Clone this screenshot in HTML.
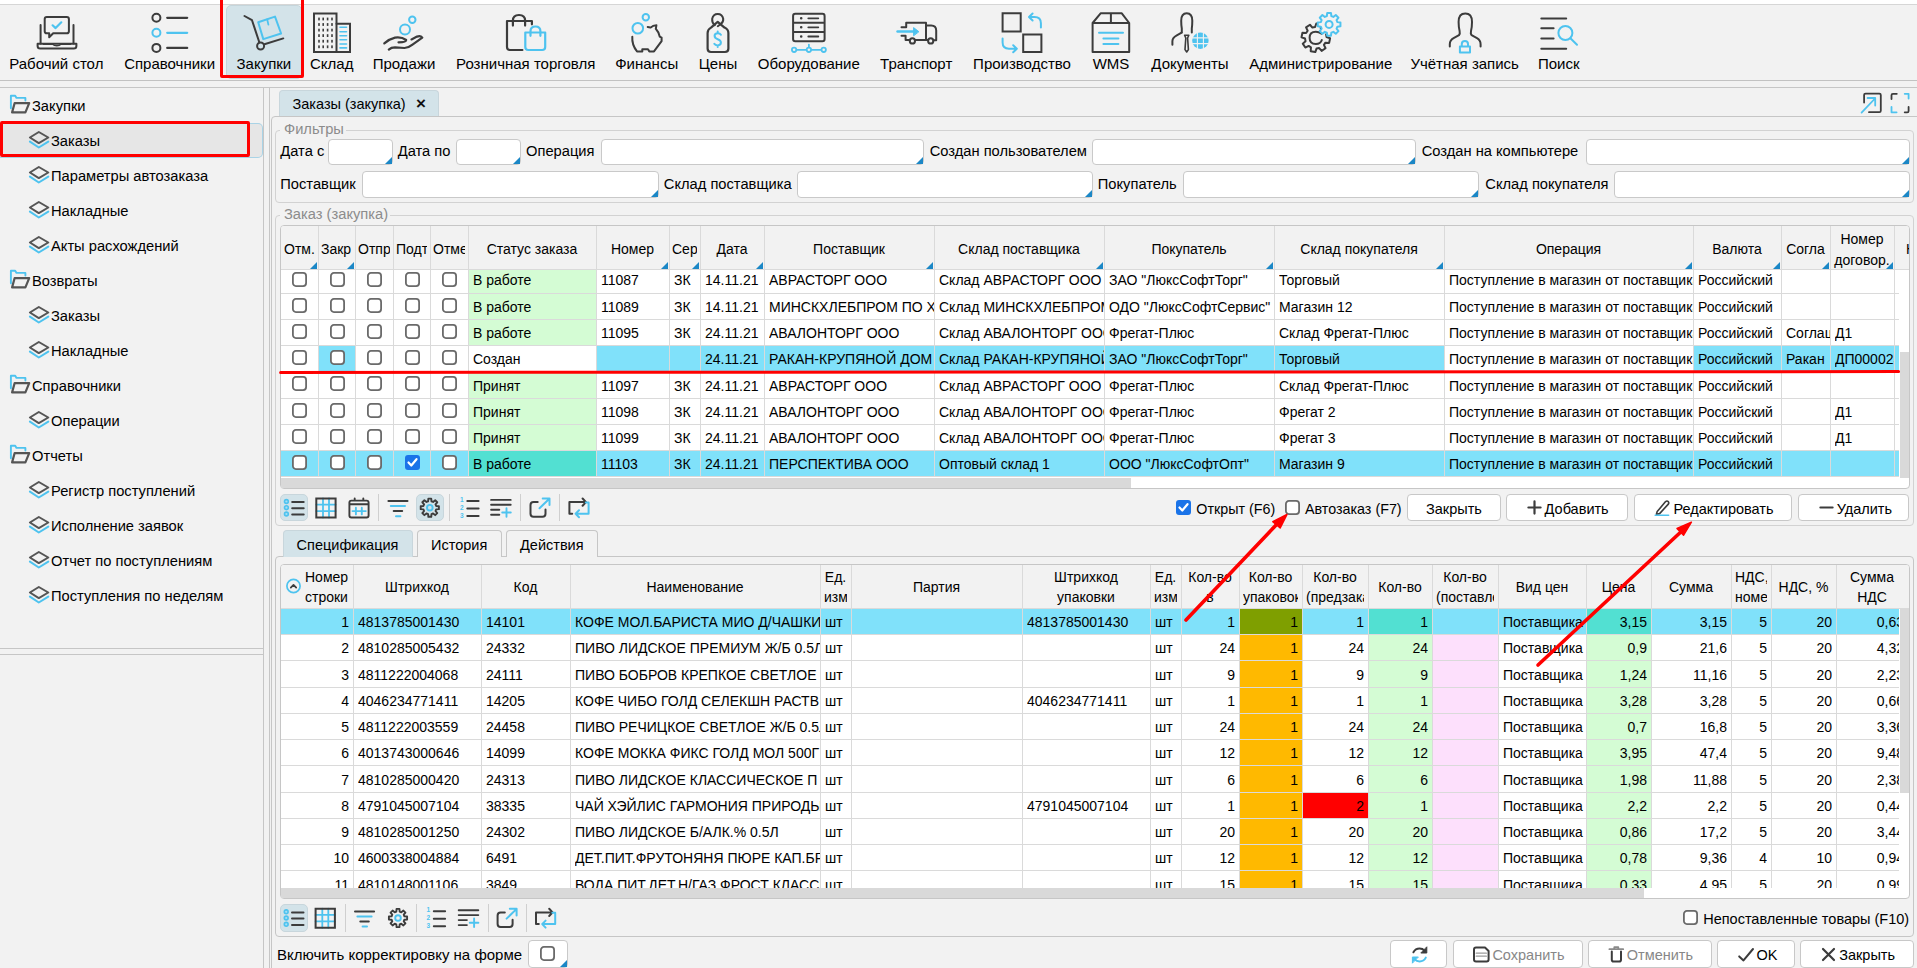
<!DOCTYPE html>
<html><head><meta charset="utf-8"><style>
html,body{margin:0;padding:0;}
body{width:1917px;height:968px;overflow:hidden;position:relative;background:#f2f2f2;font-family:"Liberation Sans", sans-serif;color:#000;}
.a{position:absolute;box-sizing:border-box;}
.t{line-height:20px;white-space:nowrap;}
.c{position:absolute;box-sizing:border-box;overflow:hidden;white-space:nowrap;font-size:14px;line-height:20px;padding:0 4px;}
</style></head><body>
<div class="a" style="left:0px;top:0px;width:1917px;height:4px;background:#fff"></div><div class="a" style="left:0px;top:4px;width:1917px;height:1px;background:#d6d6d6"></div><div class="a" style="left:0px;top:80px;width:1917px;height:1px;background:#c2c2c2"></div><div class="a" style="left:0px;top:87px;width:1917px;height:1px;background:#c6c6c6"></div><div class="a" style="left:226px;top:5px;width:76px;height:74px;background:#d3e3e9;border:1px solid #c5d5db;border-radius:5px"></div><div class="a t" style="left:-93.7px;width:300px;text-align:center;top:54px;font-size:15px;color:#000;">Рабочий стол</div><div class="a t" style="left:19.599999999999994px;width:300px;text-align:center;top:54px;font-size:15px;color:#000;">Справочники</div><div class="a t" style="left:113.89999999999998px;width:300px;text-align:center;top:54px;font-size:15px;color:#000;">Закупки</div><div class="a t" style="left:181.7px;width:300px;text-align:center;top:54px;font-size:15px;color:#000;">Склад</div><div class="a t" style="left:254px;width:300px;text-align:center;top:54px;font-size:15px;color:#000;">Продажи</div><div class="a t" style="left:375.70000000000005px;width:300px;text-align:center;top:54px;font-size:15px;color:#000;">Розничная торговля</div><div class="a t" style="left:496.70000000000005px;width:300px;text-align:center;top:54px;font-size:15px;color:#000;">Финансы</div><div class="a t" style="left:568px;width:300px;text-align:center;top:54px;font-size:15px;color:#000;">Цены</div><div class="a t" style="left:658.8px;width:300px;text-align:center;top:54px;font-size:15px;color:#000;">Оборудование</div><div class="a t" style="left:766.2px;width:300px;text-align:center;top:54px;font-size:15px;color:#000;">Транспорт</div><div class="a t" style="left:872px;width:300px;text-align:center;top:54px;font-size:15px;color:#000;">Производство</div><div class="a t" style="left:961px;width:300px;text-align:center;top:54px;font-size:15px;color:#000;">WMS</div><div class="a t" style="left:1040px;width:300px;text-align:center;top:54px;font-size:15px;color:#000;">Документы</div><div class="a t" style="left:1170.8px;width:300px;text-align:center;top:54px;font-size:15px;color:#000;">Администрирование</div><div class="a t" style="left:1314.7px;width:300px;text-align:center;top:54px;font-size:15px;color:#000;">Учётная запись</div><div class="a t" style="left:1408.8px;width:300px;text-align:center;top:54px;font-size:15px;color:#000;">Поиск</div><svg class="a" style="left:0;top:0" width="1917" height="968" viewBox="0 0 1917 968" fill="none" stroke-linecap="round" stroke-linejoin="round"><path d="M40.6 25 V43.5 M73.5 25 V43.5" stroke="#3c3c3c" stroke-width="2" fill="none" /><path d="M37.6 43.8 H76.4 V46 Q76.4 48.6 73.8 48.6 H40.2 Q37.6 48.6 37.6 46 Z" stroke="#3c3c3c" stroke-width="2" fill="none" /><path d="M43.5 44.3 H52.8 Q54 45.8 56.8 45.8 Q59.6 45.8 60.8 44.3 H70.5" stroke="#3c3c3c" stroke-width="1.5" fill="none" /><path d="M46.8 17 H66.8 Q68.9 17 68.9 19.1 V31.2 Q68.9 33.3 66.8 33.3 H53.2 L49.2 37.3 V33.3 H46.8 Q44.7 33.3 44.7 31.2 V19.1 Q44.7 17 46.8 17 Z" stroke="#3c3c3c" stroke-width="2" fill="none" /><path d="M52.6 25.3 L55.6 28.1 L61.3 22.3" stroke="#4ec3ef" stroke-width="2.2" fill="none" /><circle cx="156.4" cy="17.8" r="4" stroke="#3c3c3c" stroke-width="2" fill="none"/><path d="M167.2 17.8 H187.2" stroke="#3c3c3c" stroke-width="2.2" fill="none" /><circle cx="156.4" cy="32.8" r="4" stroke="#4ec3ef" stroke-width="2" fill="none"/><path d="M167.2 32.8 H187.2" stroke="#4ec3ef" stroke-width="2.2" fill="none" /><circle cx="156.4" cy="47.9" r="4" stroke="#3c3c3c" stroke-width="2" fill="none"/><path d="M167.2 47.9 H187.2" stroke="#3c3c3c" stroke-width="2.2" fill="none" /><path d="M244.5 16 L252 20.2 L259.3 42.2" stroke="#3c3c3c" stroke-width="2" fill="none" /><circle cx="260.6" cy="46" r="3.5" stroke="#3c3c3c" stroke-width="2" fill="none"/><path d="M264.4 44.2 L283.3 38.4" stroke="#3c3c3c" stroke-width="2" fill="none" /><path d="M258.2 22.2 L275 16.6 L281.1 33.5 L263.3 39.1 Z" stroke="#4ec3ef" stroke-width="2" fill="none" /><path d="M267.2 19.4 L268.4 24.6" stroke="#4ec3ef" stroke-width="1.8" fill="none" /><path d="M314 13.5 H336.5 V52 H314 Z" stroke="#3c3c3c" stroke-width="2" fill="none" stroke-linejoin="miter"/><path d="M336.5 23.8 H350 V52 H336.5" stroke="#3c3c3c" stroke-width="2" fill="none" stroke-linejoin="miter"/><rect x="318.2" y="17.6" width="1.6" height="2.8" fill="#3c3c3c"/><rect x="318.2" y="23.1" width="1.6" height="2.8" fill="#3c3c3c"/><rect x="318.2" y="28.700000000000003" width="1.6" height="2.8" fill="#3c3c3c"/><rect x="318.2" y="34.2" width="1.6" height="2.8" fill="#3c3c3c"/><rect x="318.2" y="39.800000000000004" width="1.6" height="2.8" fill="#3c3c3c"/><rect x="318.2" y="45.4" width="1.6" height="2.8" fill="#3c3c3c"/><rect x="322.4" y="17.6" width="1.6" height="2.8" fill="#3c3c3c"/><rect x="322.4" y="23.1" width="1.6" height="2.8" fill="#3c3c3c"/><rect x="322.4" y="28.700000000000003" width="1.6" height="2.8" fill="#3c3c3c"/><rect x="322.4" y="34.2" width="1.6" height="2.8" fill="#3c3c3c"/><rect x="322.4" y="39.800000000000004" width="1.6" height="2.8" fill="#3c3c3c"/><rect x="322.4" y="45.4" width="1.6" height="2.8" fill="#3c3c3c"/><rect x="326.8" y="17.6" width="1.6" height="2.8" fill="#3c3c3c"/><rect x="326.8" y="23.1" width="1.6" height="2.8" fill="#3c3c3c"/><rect x="326.8" y="28.700000000000003" width="1.6" height="2.8" fill="#3c3c3c"/><rect x="326.8" y="34.2" width="1.6" height="2.8" fill="#3c3c3c"/><rect x="326.8" y="39.800000000000004" width="1.6" height="2.8" fill="#3c3c3c"/><rect x="326.8" y="45.4" width="1.6" height="2.8" fill="#3c3c3c"/><rect x="331.2" y="17.6" width="1.6" height="2.8" fill="#3c3c3c"/><rect x="331.2" y="23.1" width="1.6" height="2.8" fill="#3c3c3c"/><rect x="331.2" y="28.700000000000003" width="1.6" height="2.8" fill="#3c3c3c"/><rect x="331.2" y="34.2" width="1.6" height="2.8" fill="#3c3c3c"/><rect x="331.2" y="39.800000000000004" width="1.6" height="2.8" fill="#3c3c3c"/><rect x="331.2" y="45.4" width="1.6" height="2.8" fill="#3c3c3c"/><path d="M340 27.3 H346.5" stroke="#4ec3ef" stroke-width="1.6" fill="none" /><path d="M340 31.8 H346.5" stroke="#4ec3ef" stroke-width="1.6" fill="none" /><path d="M340 35.7 H346.5" stroke="#4ec3ef" stroke-width="1.6" fill="none" /><path d="M340 39.8 H346.5" stroke="#4ec3ef" stroke-width="1.6" fill="none" /><path d="M340 44 H346.5" stroke="#4ec3ef" stroke-width="1.6" fill="none" /><path d="M340 47.9 H346.5" stroke="#4ec3ef" stroke-width="1.6" fill="none" /><circle cx="412.3" cy="19.7" r="3.2" stroke="#4ec3ef" stroke-width="2" fill="none"/><circle cx="405" cy="29.4" r="5" stroke="#4ec3ef" stroke-width="2" fill="none"/><path d="M384.3 43.4 Q389.5 38.8 395 37.6 Q401.5 36.6 406.2 40 Q406.2 42.3 398.5 42.3" stroke="#3c3c3c" stroke-width="2.2" fill="none" /><path d="M388.8 49.6 Q391.2 47.4 395 47.4 L404.5 48 Q408.5 47.8 412.5 44.6 L422.3 37.6 Q420.5 35.3 417 36.6 L411.5 39.4" stroke="#3c3c3c" stroke-width="2.2" fill="none" /><path d="M531.9 24.3 V21 H507 V47 Q507 50 510 50 H522.4" stroke="#3c3c3c" stroke-width="2.2" fill="none" /><path d="M512.9 25.6 V20.6 Q512.9 15 519 15 Q525.1 15 525.1 20.6 V25.6" stroke="#3c3c3c" stroke-width="2.2" fill="none" /><path d="M525.3 32.5 H545.2 V47 Q545.2 50 542.2 50 H528.3 Q525.3 50 525.3 47 Z" stroke="#4ec3ef" stroke-width="2.2" fill="none" /><path d="M530.5 35.8 V31.3 Q530.5 26.5 535.5 26.5 Q540.4 26.5 540.4 31.3 V35.8" stroke="#4ec3ef" stroke-width="2.2" fill="none" /><circle cx="637.8" cy="28.3" r="5.3" stroke="#4ec3ef" stroke-width="2" fill="none"/><circle cx="645.8" cy="17.3" r="3.2" stroke="#4ec3ef" stroke-width="2" fill="none"/><path d="M632.3 36.8 Q631.7 44.8 637 51.4 H642.3 V49.3 H648 L649.3 51.4 H654 L661.6 41.2 V37.6 L659.7 36.6 Q658.4 31.5 655.8 28.8 L656.4 25.3 Q652.8 25.4 650.6 27.6 Q649.1 27 647.7 27" stroke="#3c3c3c" stroke-width="2" fill="none" /><path d="M707.6 33 Q707.6 29.4 711 27.6 L717.7 21.8 L724.5 27.6 Q728.4 29.4 728.4 33 V48.6 Q728.4 52 725 52 H711 Q707.6 52 707.6 48.6 Z" stroke="#3c3c3c" stroke-width="2.2" fill="none" /><path d="M714.8 25.2 Q711.8 22.8 712.2 18.8 Q713.2 14 717.7 14 Q722.3 14 723.2 18.8 Q723.6 22 720.5 24.2 L717.8 26.2" stroke="#3c3c3c" stroke-width="2" fill="none" /><path d="M720.9 34.8 Q720 33.2 717.7 33.2 Q714.6 33.2 714.6 35.8 Q714.6 38.2 717.7 39.2 Q720.9 40.2 720.9 42.6 Q720.9 45.4 717.7 45.4 Q715.2 45.4 714.3 43.8 M717.7 31.6 V33.2 M717.7 45.4 V47" stroke="#4ec3ef" stroke-width="2" fill="none" /><path d="M795.3 13.8 H822.4 Q824.6 13.8 824.6 16 V39 Q824.6 41.2 822.4 41.2 H795.3 Q793.1 41.2 793.1 39 V16 Q793.1 13.8 795.3 13.8 Z M793.1 22.7 H824.6 M793.1 31.9 H824.6" stroke="#3c3c3c" stroke-width="2" fill="none" /><circle cx="801.2" cy="18.3" r="0.6" stroke="#3c3c3c" stroke-width="1.4" fill="#3c3c3c"/><path d="M808.3 18.3 H818.3" stroke="#3c3c3c" stroke-width="1.8" fill="none" /><circle cx="801.2" cy="27.3" r="0.6" stroke="#3c3c3c" stroke-width="1.4" fill="#3c3c3c"/><path d="M808.3 27.3 H818.3" stroke="#3c3c3c" stroke-width="1.8" fill="none" /><circle cx="801.2" cy="36.5" r="0.6" stroke="#3c3c3c" stroke-width="1.4" fill="#3c3c3c"/><path d="M808.3 36.5 H818.3" stroke="#3c3c3c" stroke-width="1.8" fill="none" /><path d="M796.3 49.8 H806.7 M811.1 49.8 H821.5 M808.9 44.6 V47.6" stroke="#4ec3ef" stroke-width="1.8" fill="none" /><circle cx="794.1" cy="49.8" r="2.2" stroke="#4ec3ef" stroke-width="1.8" fill="#f2f2f2"/><circle cx="808.9" cy="49.8" r="2.2" stroke="#4ec3ef" stroke-width="1.8" fill="#f2f2f2"/><circle cx="823.7" cy="49.8" r="2.2" stroke="#4ec3ef" stroke-width="1.8" fill="#f2f2f2"/><path d="M901.5 27.2 H906.2 V22.7 H926 V39.9 M901.5 35.7 H905.6 V39.9 H909.6 M915.3 39.9 H927.8 M926 25.4 H931.2 Q936.2 25.4 936.2 30.5 V40.3 H933.6" stroke="#3c3c3c" stroke-width="2" fill="none" /><circle cx="912.4" cy="40.9" r="2.6" stroke="#3c3c3c" stroke-width="2" fill="#f2f2f2"/><circle cx="930.7" cy="40.9" r="2.6" stroke="#3c3c3c" stroke-width="2" fill="#f2f2f2"/><path d="M897.5 31.5 H914.5" stroke="#4ec3ef" stroke-width="2.4" fill="none" /><path d="M918.6 31.5 L913.6 27.6 V35.4 Z" stroke="#4ec3ef" stroke-width="1" fill="#4ec3ef" /><path d="M1002.6 13.3 H1020.7 V31.4 H1002.6 Z M1023.2 34.5 H1041.4 V52.1 H1023.2 Z" stroke="#3c3c3c" stroke-width="2" fill="none" stroke-linejoin="miter"/><path d="M1040.9 27.6 V23.2 Q1040.9 17 1034.5 17 H1029.2 M1032.6 13.5 L1029 17 L1032.6 20.5" stroke="#4ec3ef" stroke-width="2" fill="none" /><path d="M1002.6 38.4 V42.6 Q1002.6 48.7 1009 48.7 H1016.6 M1013.2 45.2 L1016.8 48.7 L1013.2 52.2" stroke="#4ec3ef" stroke-width="2" fill="none" /><path d="M1092.6 23 L1100.6 13.3 H1121.8 L1129.2 23 V52.1 H1092.6 Z M1092.6 23 H1129.2 M1110.9 13.3 V23" stroke="#3c3c3c" stroke-width="2" fill="none" /><path d="M1099 32.7 H1123 M1103.4 38.4 H1118.4 M1103.4 44.1 H1118.4" stroke="#4ec3ef" stroke-width="2" fill="none" /><path d="M1181.8 32.5 V28.5 Q1181.2 25 1181.2 20.8 Q1181.2 13.3 1186.7 13.3 Q1192.3 13.3 1192.3 20.8 Q1192.3 25 1191.8 28.5 V32.5" stroke="#3c3c3c" stroke-width="2" fill="none" /><path d="M1181.6 32.7 L1176.8 35.3 Q1172.4 37.6 1172.4 41.2 V44.7" stroke="#3c3c3c" stroke-width="2" fill="none" /><path d="M1184.6 35.2 H1188.8 L1187.6 38 L1188.4 49.6 L1186.7 52 L1185 49.6 L1185.8 38 Z" stroke="#3c3c3c" stroke-width="1.6" fill="none" /><circle cx="1200.4" cy="40.8" r="8.2" stroke="#4ec3ef" stroke-width="0" fill="#4ec3ef"/><path d="M1197.4 33 V48.6 M1203.4 33 V48.6 M1192.4 37.9 H1208.4 M1192.4 43.6 H1208.4" stroke="#f2f2f2" stroke-width="1.1" fill="none" /><path d="M1326.58 37.08 L1330.09 38.30 L1329.16 42.90 L1325.44 42.66 L1323.93 44.91 L1325.55 48.26 L1321.64 50.85 L1319.18 48.06 L1316.52 48.58 L1315.30 52.09 L1310.70 51.16 L1310.94 47.44 L1308.69 45.93 L1305.34 47.55 L1302.75 43.64 L1305.54 41.18 L1305.02 38.52 L1301.51 37.30 L1302.44 32.70 L1306.16 32.94 L1307.67 30.69 L1306.05 27.34 L1309.96 24.75 L1312.42 27.54 L1315.08 27.02 L1316.30 23.51 L1320.90 24.44 L1320.66 28.16 L1322.91 29.67 L1326.26 28.05 L1328.85 31.96 L1326.06 34.42 Z" stroke="#3c3c3c" stroke-width="2" fill="none" /><path d="M1321.5 33.6 Q1318.8 31.7 1315.8 31.7 Q1309.6 31.7 1309.6 37.8 Q1309.6 44 1315.8 44 Q1320.6 44 1321.8 40" stroke="#3c3c3c" stroke-width="2" fill="none" /><path d="M1337.40 22.13 L1340.44 22.51 L1340.44 26.29 L1337.40 26.67 L1336.57 28.66 L1338.46 31.09 L1335.79 33.76 L1333.36 31.87 L1331.37 32.70 L1330.99 35.74 L1327.21 35.74 L1326.83 32.70 L1324.84 31.87 L1322.41 33.76 L1319.74 31.09 L1321.63 28.66 L1320.80 26.67 L1317.76 26.29 L1317.76 22.51 L1320.80 22.13 L1321.63 20.14 L1319.74 17.71 L1322.41 15.04 L1324.84 16.93 L1326.83 16.10 L1327.21 13.06 L1330.99 13.06 L1331.37 16.10 L1333.36 16.93 L1335.79 15.04 L1338.46 17.71 L1336.57 20.14 Z" stroke="#4ec3ef" stroke-width="2" fill="#f2f2f2" /><circle cx="1329.1" cy="24.4" r="3.5" stroke="#4ec3ef" stroke-width="2" fill="none"/><path d="M1449.8 46.5 V44.3 Q1449.8 40.3 1453.6 38.2 L1459 35.2 Q1460.2 33.6 1459.6 31 Q1458.6 27 1458.6 22 Q1458.6 13.6 1465.3 13.6 Q1472 13.6 1472 22 Q1472 27 1471 31 Q1470.4 33.6 1471.6 35.2 L1477 38.2 Q1480.6 40.3 1480.6 44.3 V46.5" stroke="#3c3c3c" stroke-width="2" fill="none" /><path d="M1459.9 46.4 H1470 V52.5 H1459.9 Z M1461.8 46.4 V44 Q1461.8 41 1464.9 41 Q1468 41 1468 44 V46.4" stroke="#4ec3ef" stroke-width="2" fill="none" /><path d="M1541.3 18.5 H1566.2 M1541.3 28.3 H1553.6 M1541.3 38.5 H1553.6 M1541.3 48.7 H1566.2" stroke="#3c3c3c" stroke-width="2" fill="none" /><circle cx="1565.4" cy="33" r="7" stroke="#4ec3ef" stroke-width="2" fill="none"/><path d="M1570.4 38.2 L1577 44.7" stroke="#4ec3ef" stroke-width="2" fill="none" /></svg><div class="a" style="left:220px;top:-4px;width:84px;height:82px;border:3px solid #f00;border-radius:2px"></div><div class="a" style="left:263px;top:88px;width:1px;height:880px;background:#c6c6c6"></div><div class="a" style="left:269px;top:88px;width:1px;height:880px;background:#c6c6c6"></div><div class="a" style="left:0px;top:648px;width:263px;height:1px;background:#c6c6c6"></div><div class="a" style="left:0px;top:654px;width:263px;height:1px;background:#c6c6c6"></div><div class="a" style="left:0px;top:123px;width:263px;height:35px;background:#e6e6e6;border:1px solid #a9d3e6;border-left:none;border-radius:0 5px 5px 0"></div><svg class="a" style="left:0;top:0" width="1917" height="968" viewBox="0 0 1917 968" fill="none" stroke-linecap="round" stroke-linejoin="round"><path d="M10.9 108.2 V95.7 H15.2 L16.5 97.9 H25.4 V100.6" stroke="#4ec3ef" stroke-width="1.9" fill="none" /><path d="M14.6 103.2 H29.2 L25.4 112.4 H12.1 Z" stroke="#555" stroke-width="2.2" fill="none" /></svg><div class="a t" style="left:32px;top:96px;font-size:14.7px;color:#000;">Закупки</div><svg class="a" style="left:0;top:0" width="1917" height="968" viewBox="0 0 1917 968" fill="none" stroke-linecap="round" stroke-linejoin="round"><path d="M29.9 137.5 L38.8 132 L48.3 137.5 L38.8 143.1 Z" stroke="#555" stroke-width="2" fill="none" /><path d="M29.9 141.6 L38.8 147.5 L48.3 141.6" stroke="#4ec3ef" stroke-width="2" fill="none" /></svg><div class="a t" style="left:51px;top:131px;font-size:14.7px;color:#000;">Заказы</div><svg class="a" style="left:0;top:0" width="1917" height="968" viewBox="0 0 1917 968" fill="none" stroke-linecap="round" stroke-linejoin="round"><path d="M29.9 172.5 L38.8 167 L48.3 172.5 L38.8 178.1 Z" stroke="#555" stroke-width="2" fill="none" /><path d="M29.9 176.6 L38.8 182.5 L48.3 176.6" stroke="#4ec3ef" stroke-width="2" fill="none" /></svg><div class="a t" style="left:51px;top:166px;font-size:14.7px;color:#000;">Параметры автозаказа</div><svg class="a" style="left:0;top:0" width="1917" height="968" viewBox="0 0 1917 968" fill="none" stroke-linecap="round" stroke-linejoin="round"><path d="M29.9 207.5 L38.8 202 L48.3 207.5 L38.8 213.1 Z" stroke="#555" stroke-width="2" fill="none" /><path d="M29.9 211.6 L38.8 217.5 L48.3 211.6" stroke="#4ec3ef" stroke-width="2" fill="none" /></svg><div class="a t" style="left:51px;top:201px;font-size:14.7px;color:#000;">Накладные</div><svg class="a" style="left:0;top:0" width="1917" height="968" viewBox="0 0 1917 968" fill="none" stroke-linecap="round" stroke-linejoin="round"><path d="M29.9 242.5 L38.8 237 L48.3 242.5 L38.8 248.1 Z" stroke="#555" stroke-width="2" fill="none" /><path d="M29.9 246.6 L38.8 252.5 L48.3 246.6" stroke="#4ec3ef" stroke-width="2" fill="none" /></svg><div class="a t" style="left:51px;top:236px;font-size:14.7px;color:#000;">Акты расхождений</div><svg class="a" style="left:0;top:0" width="1917" height="968" viewBox="0 0 1917 968" fill="none" stroke-linecap="round" stroke-linejoin="round"><path d="M10.9 283.2 V270.7 H15.2 L16.5 272.9 H25.4 V275.6" stroke="#4ec3ef" stroke-width="1.9" fill="none" /><path d="M14.6 278.2 H29.2 L25.4 287.4 H12.1 Z" stroke="#555" stroke-width="2.2" fill="none" /></svg><div class="a t" style="left:32px;top:271px;font-size:14.7px;color:#000;">Возвраты</div><svg class="a" style="left:0;top:0" width="1917" height="968" viewBox="0 0 1917 968" fill="none" stroke-linecap="round" stroke-linejoin="round"><path d="M29.9 312.5 L38.8 307 L48.3 312.5 L38.8 318.1 Z" stroke="#555" stroke-width="2" fill="none" /><path d="M29.9 316.6 L38.8 322.5 L48.3 316.6" stroke="#4ec3ef" stroke-width="2" fill="none" /></svg><div class="a t" style="left:51px;top:306px;font-size:14.7px;color:#000;">Заказы</div><svg class="a" style="left:0;top:0" width="1917" height="968" viewBox="0 0 1917 968" fill="none" stroke-linecap="round" stroke-linejoin="round"><path d="M29.9 347.5 L38.8 342 L48.3 347.5 L38.8 353.1 Z" stroke="#555" stroke-width="2" fill="none" /><path d="M29.9 351.6 L38.8 357.5 L48.3 351.6" stroke="#4ec3ef" stroke-width="2" fill="none" /></svg><div class="a t" style="left:51px;top:341px;font-size:14.7px;color:#000;">Накладные</div><svg class="a" style="left:0;top:0" width="1917" height="968" viewBox="0 0 1917 968" fill="none" stroke-linecap="round" stroke-linejoin="round"><path d="M10.9 388.2 V375.7 H15.2 L16.5 377.9 H25.4 V380.6" stroke="#4ec3ef" stroke-width="1.9" fill="none" /><path d="M14.6 383.2 H29.2 L25.4 392.4 H12.1 Z" stroke="#555" stroke-width="2.2" fill="none" /></svg><div class="a t" style="left:32px;top:376px;font-size:14.7px;color:#000;">Справочники</div><svg class="a" style="left:0;top:0" width="1917" height="968" viewBox="0 0 1917 968" fill="none" stroke-linecap="round" stroke-linejoin="round"><path d="M29.9 417.5 L38.8 412 L48.3 417.5 L38.8 423.1 Z" stroke="#555" stroke-width="2" fill="none" /><path d="M29.9 421.6 L38.8 427.5 L48.3 421.6" stroke="#4ec3ef" stroke-width="2" fill="none" /></svg><div class="a t" style="left:51px;top:411px;font-size:14.7px;color:#000;">Операции</div><svg class="a" style="left:0;top:0" width="1917" height="968" viewBox="0 0 1917 968" fill="none" stroke-linecap="round" stroke-linejoin="round"><path d="M10.9 458.2 V445.7 H15.2 L16.5 447.9 H25.4 V450.6" stroke="#4ec3ef" stroke-width="1.9" fill="none" /><path d="M14.6 453.2 H29.2 L25.4 462.4 H12.1 Z" stroke="#555" stroke-width="2.2" fill="none" /></svg><div class="a t" style="left:32px;top:446px;font-size:14.7px;color:#000;">Отчеты</div><svg class="a" style="left:0;top:0" width="1917" height="968" viewBox="0 0 1917 968" fill="none" stroke-linecap="round" stroke-linejoin="round"><path d="M29.9 487.5 L38.8 482 L48.3 487.5 L38.8 493.1 Z" stroke="#555" stroke-width="2" fill="none" /><path d="M29.9 491.6 L38.8 497.5 L48.3 491.6" stroke="#4ec3ef" stroke-width="2" fill="none" /></svg><div class="a t" style="left:51px;top:481px;font-size:14.7px;color:#000;">Регистр поступлений</div><svg class="a" style="left:0;top:0" width="1917" height="968" viewBox="0 0 1917 968" fill="none" stroke-linecap="round" stroke-linejoin="round"><path d="M29.9 522.5 L38.8 517 L48.3 522.5 L38.8 528.1 Z" stroke="#555" stroke-width="2" fill="none" /><path d="M29.9 526.6 L38.8 532.5 L48.3 526.6" stroke="#4ec3ef" stroke-width="2" fill="none" /></svg><div class="a t" style="left:51px;top:516px;font-size:14.7px;color:#000;">Исполнение заявок</div><svg class="a" style="left:0;top:0" width="1917" height="968" viewBox="0 0 1917 968" fill="none" stroke-linecap="round" stroke-linejoin="round"><path d="M29.9 557.5 L38.8 552 L48.3 557.5 L38.8 563.1 Z" stroke="#555" stroke-width="2" fill="none" /><path d="M29.9 561.6 L38.8 567.5 L48.3 561.6" stroke="#4ec3ef" stroke-width="2" fill="none" /></svg><div class="a t" style="left:51px;top:551px;font-size:14.7px;color:#000;">Отчет по поступлениям</div><svg class="a" style="left:0;top:0" width="1917" height="968" viewBox="0 0 1917 968" fill="none" stroke-linecap="round" stroke-linejoin="round"><path d="M29.9 592.5 L38.8 587 L48.3 592.5 L38.8 598.1 Z" stroke="#555" stroke-width="2" fill="none" /><path d="M29.9 596.6 L38.8 602.5 L48.3 596.6" stroke="#4ec3ef" stroke-width="2" fill="none" /></svg><div class="a t" style="left:51px;top:586px;font-size:14.7px;color:#000;">Поступления по неделям</div><div class="a" style="left:0px;top:121px;width:250px;height:36px;border:3px solid #f00;border-radius:2px"></div><div class="a" style="left:279px;top:90px;width:160px;height:27px;background:#d3e3e9;border:1px solid #c8d6dc;border-bottom:none;border-radius:4px 4px 0 0"></div><div class="a t" style="left:292.5px;top:94px;font-size:14.5px;color:#000;">Заказы (закупка)</div><div class="a t" style="left:416px;top:94px;font-size:17px;color:#111;font-weight:bold">×</div><div class="a" style="left:271px;top:116px;width:1660px;height:900px;border:1px solid #c6c6c6;border-radius:4px"></div><svg class="a" style="left:0;top:0" width="1917" height="968" viewBox="0 0 1917 968" fill="none" stroke-linecap="round" stroke-linejoin="round"><path d="M1864.1 102.5 V95 Q1864.1 93.6 1865.5 93.6 H1879.4 Q1880.8 93.6 1880.8 95 V110.8 Q1880.8 112.2 1879.4 112.2 H1869" stroke="#3c3c3c" stroke-width="1.8" fill="none" /><path d="M1861.6 112.6 L1875 98.5 M1867.6 98 H1875.2 V105.6" stroke="#4ec3ef" stroke-width="1.8" fill="none" /><path d="M1891.5 99 V95.2 Q1891.5 93.8 1892.9 93.8 H1896.8 M1904.7 112.3 H1907.2 Q1908.6 112.3 1908.6 110.9 V107" stroke="#3c3c3c" stroke-width="1.8" fill="none" /><path d="M1904.7 93.8 H1908.6 V98.5 M1891.5 107 V112.3 H1896.6" stroke="#4ec3ef" stroke-width="1.8" fill="none" /></svg><div class="a" style="left:275px;top:130px;width:1639px;height:73px;border:1px solid #d2d2d2;border-radius:4px"></div><div class="a" style="left:280px;top:127px;width:66px;height:6px;background:#f2f2f2"></div><div class="a t" style="left:284px;top:119px;font-size:14.7px;color:#8c8c8c;">Фильтры</div><div class="a t" style="left:280.3px;top:141px;font-size:14.7px;color:#000;">Дата с</div><div class="a" style="left:328px;top:139px;width:65px;height:26px;background:#fff;border:1px solid #c9c9c9;border-radius:4px"></div><svg class="a" style="left:385px;top:157px;" width="7" height="7" viewBox="0 0 7 7" fill="none" stroke-linecap="round" stroke-linejoin="round"><path d="M7 0 L7 7 L0 7 Z" fill="#1b87c6"/></svg><div class="a t" style="left:397.7px;top:141px;font-size:14.7px;color:#000;">Дата по</div><div class="a" style="left:456px;top:139px;width:65px;height:26px;background:#fff;border:1px solid #c9c9c9;border-radius:4px"></div><svg class="a" style="left:513px;top:157px;" width="7" height="7" viewBox="0 0 7 7" fill="none" stroke-linecap="round" stroke-linejoin="round"><path d="M7 0 L7 7 L0 7 Z" fill="#1b87c6"/></svg><div class="a t" style="left:526px;top:141px;font-size:14.7px;color:#000;">Операция</div><div class="a" style="left:601px;top:139px;width:323px;height:26px;background:#fff;border:1px solid #c9c9c9;border-radius:4px"></div><svg class="a" style="left:916px;top:157px;" width="7" height="7" viewBox="0 0 7 7" fill="none" stroke-linecap="round" stroke-linejoin="round"><path d="M7 0 L7 7 L0 7 Z" fill="#1b87c6"/></svg><div class="a t" style="left:929.7px;top:141px;font-size:14.7px;color:#000;">Создан пользователем</div><div class="a" style="left:1092px;top:139px;width:324px;height:26px;background:#fff;border:1px solid #c9c9c9;border-radius:4px"></div><svg class="a" style="left:1408px;top:157px;" width="7" height="7" viewBox="0 0 7 7" fill="none" stroke-linecap="round" stroke-linejoin="round"><path d="M7 0 L7 7 L0 7 Z" fill="#1b87c6"/></svg><div class="a t" style="left:1421.7px;top:141px;font-size:14.7px;color:#000;">Создан на компьютере</div><div class="a" style="left:1586px;top:139px;width:324px;height:26px;background:#fff;border:1px solid #c9c9c9;border-radius:4px"></div><svg class="a" style="left:1902px;top:157px;" width="7" height="7" viewBox="0 0 7 7" fill="none" stroke-linecap="round" stroke-linejoin="round"><path d="M7 0 L7 7 L0 7 Z" fill="#1b87c6"/></svg><div class="a t" style="left:280.3px;top:174px;font-size:14.7px;color:#000;">Поставщик</div><div class="a" style="left:362px;top:171px;width:297px;height:27px;background:#fff;border:1px solid #c9c9c9;border-radius:4px"></div><svg class="a" style="left:651px;top:190px;" width="7" height="7" viewBox="0 0 7 7" fill="none" stroke-linecap="round" stroke-linejoin="round"><path d="M7 0 L7 7 L0 7 Z" fill="#1b87c6"/></svg><div class="a t" style="left:663.8px;top:174px;font-size:14.7px;color:#000;">Склад поставщика</div><div class="a" style="left:797px;top:171px;width:296px;height:27px;background:#fff;border:1px solid #c9c9c9;border-radius:4px"></div><svg class="a" style="left:1085px;top:190px;" width="7" height="7" viewBox="0 0 7 7" fill="none" stroke-linecap="round" stroke-linejoin="round"><path d="M7 0 L7 7 L0 7 Z" fill="#1b87c6"/></svg><div class="a t" style="left:1097.8px;top:174px;font-size:14.7px;color:#000;">Покупатель</div><div class="a" style="left:1183px;top:171px;width:296px;height:27px;background:#fff;border:1px solid #c9c9c9;border-radius:4px"></div><svg class="a" style="left:1471px;top:190px;" width="7" height="7" viewBox="0 0 7 7" fill="none" stroke-linecap="round" stroke-linejoin="round"><path d="M7 0 L7 7 L0 7 Z" fill="#1b87c6"/></svg><div class="a t" style="left:1485.3px;top:174px;font-size:14.7px;color:#000;">Склад покупателя</div><div class="a" style="left:1614px;top:171px;width:296px;height:27px;background:#fff;border:1px solid #c9c9c9;border-radius:4px"></div><svg class="a" style="left:1902px;top:190px;" width="7" height="7" viewBox="0 0 7 7" fill="none" stroke-linecap="round" stroke-linejoin="round"><path d="M7 0 L7 7 L0 7 Z" fill="#1b87c6"/></svg><div class="a" style="left:275px;top:215px;width:1639px;height:311px;border:1px solid #d2d2d2;border-radius:4px"></div><div class="a" style="left:280px;top:212px;width:110px;height:6px;background:#f2f2f2"></div><div class="a t" style="left:284px;top:204px;font-size:14.7px;color:#8c8c8c;">Заказ (закупка)</div><div class="a" style="left:280px;top:225px;width:1630px;height:264px;background:#fff;border:1px solid #c6c6c6;border-radius:4px"></div><div class="a" style="left:281px;top:226px;width:1628px;height:43px;background:#f2f2f2;border-radius:3px 3px 0 0"></div><svg class="a" style="left:292px;top:272px;" width="15" height="15" viewBox="0 0 15 15" fill="none" stroke-linecap="round" stroke-linejoin="round"><rect x="0.9" y="0.9" width="13.2" height="13.2" rx="3" fill="#fff" stroke="#6a6a6a" stroke-width="1.8"/></svg><svg class="a" style="left:330px;top:272px;" width="15" height="15" viewBox="0 0 15 15" fill="none" stroke-linecap="round" stroke-linejoin="round"><rect x="0.9" y="0.9" width="13.2" height="13.2" rx="3" fill="#fff" stroke="#6a6a6a" stroke-width="1.8"/></svg><svg class="a" style="left:367px;top:272px;" width="15" height="15" viewBox="0 0 15 15" fill="none" stroke-linecap="round" stroke-linejoin="round"><rect x="0.9" y="0.9" width="13.2" height="13.2" rx="3" fill="#fff" stroke="#6a6a6a" stroke-width="1.8"/></svg><svg class="a" style="left:405px;top:272px;" width="15" height="15" viewBox="0 0 15 15" fill="none" stroke-linecap="round" stroke-linejoin="round"><rect x="0.9" y="0.9" width="13.2" height="13.2" rx="3" fill="#fff" stroke="#6a6a6a" stroke-width="1.8"/></svg><svg class="a" style="left:442px;top:272px;" width="15" height="15" viewBox="0 0 15 15" fill="none" stroke-linecap="round" stroke-linejoin="round"><rect x="0.9" y="0.9" width="13.2" height="13.2" rx="3" fill="#fff" stroke="#6a6a6a" stroke-width="1.8"/></svg><div class="c" style="left:468px;top:270px;width:128px;height:23px;background:#d4fcd4;"><div style="position:absolute;left:5px;right:0px;top:0.0px;overflow:hidden;">В работе</div></div><div class="c" style="left:596px;top:270px;width:73px;height:23px;"><div style="position:absolute;left:5px;right:0px;top:0.0px;overflow:hidden;">11087</div></div><div class="c" style="left:669px;top:270px;width:31px;height:23px;"><div style="position:absolute;left:5px;right:0px;top:0.0px;overflow:hidden;">ЗК</div></div><div class="c" style="left:700px;top:270px;width:64px;height:23px;"><div style="position:absolute;left:5px;right:0px;top:0.0px;overflow:hidden;">14.11.21</div></div><div class="c" style="left:764px;top:270px;width:170px;height:23px;"><div style="position:absolute;left:5px;right:0px;top:0.0px;overflow:hidden;">АВРАСТОРГ ООО</div></div><div class="c" style="left:934px;top:270px;width:170px;height:23px;"><div style="position:absolute;left:5px;right:0px;top:0.0px;overflow:hidden;">Склад АВРАСТОРГ ООО</div></div><div class="c" style="left:1104px;top:270px;width:170px;height:23px;"><div style="position:absolute;left:5px;right:0px;top:0.0px;overflow:hidden;">ЗАО &quot;ЛюксСофтТорг&quot;</div></div><div class="c" style="left:1274px;top:270px;width:170px;height:23px;"><div style="position:absolute;left:5px;right:0px;top:0.0px;overflow:hidden;">Торговый</div></div><div class="c" style="left:1444px;top:270px;width:249px;height:23px;"><div style="position:absolute;left:5px;right:0px;top:0.0px;overflow:hidden;">Поступление в магазин от поставщика</div></div><div class="c" style="left:1693px;top:270px;width:88px;height:23px;"><div style="position:absolute;left:5px;right:0px;top:0.0px;overflow:hidden;">Российский</div></div><div class="c" style="left:1781px;top:270px;width:49px;height:23px;"><div style="position:absolute;left:5px;right:0px;top:0.0px;overflow:hidden;"></div></div><div class="c" style="left:1830px;top:270px;width:64px;height:23px;"><div style="position:absolute;left:5px;right:0px;top:0.0px;overflow:hidden;"></div></div><svg class="a" style="left:292px;top:298px;" width="15" height="15" viewBox="0 0 15 15" fill="none" stroke-linecap="round" stroke-linejoin="round"><rect x="0.9" y="0.9" width="13.2" height="13.2" rx="3" fill="#fff" stroke="#6a6a6a" stroke-width="1.8"/></svg><svg class="a" style="left:330px;top:298px;" width="15" height="15" viewBox="0 0 15 15" fill="none" stroke-linecap="round" stroke-linejoin="round"><rect x="0.9" y="0.9" width="13.2" height="13.2" rx="3" fill="#fff" stroke="#6a6a6a" stroke-width="1.8"/></svg><svg class="a" style="left:367px;top:298px;" width="15" height="15" viewBox="0 0 15 15" fill="none" stroke-linecap="round" stroke-linejoin="round"><rect x="0.9" y="0.9" width="13.2" height="13.2" rx="3" fill="#fff" stroke="#6a6a6a" stroke-width="1.8"/></svg><svg class="a" style="left:405px;top:298px;" width="15" height="15" viewBox="0 0 15 15" fill="none" stroke-linecap="round" stroke-linejoin="round"><rect x="0.9" y="0.9" width="13.2" height="13.2" rx="3" fill="#fff" stroke="#6a6a6a" stroke-width="1.8"/></svg><svg class="a" style="left:442px;top:298px;" width="15" height="15" viewBox="0 0 15 15" fill="none" stroke-linecap="round" stroke-linejoin="round"><rect x="0.9" y="0.9" width="13.2" height="13.2" rx="3" fill="#fff" stroke="#6a6a6a" stroke-width="1.8"/></svg><div class="c" style="left:468px;top:294px;width:128px;height:25px;background:#d4fcd4;"><div style="position:absolute;left:5px;right:0px;top:3.0px;overflow:hidden;">В работе</div></div><div class="c" style="left:596px;top:294px;width:73px;height:25px;"><div style="position:absolute;left:5px;right:0px;top:3.0px;overflow:hidden;">11089</div></div><div class="c" style="left:669px;top:294px;width:31px;height:25px;"><div style="position:absolute;left:5px;right:0px;top:3.0px;overflow:hidden;">ЗК</div></div><div class="c" style="left:700px;top:294px;width:64px;height:25px;"><div style="position:absolute;left:5px;right:0px;top:3.0px;overflow:hidden;">14.11.21</div></div><div class="c" style="left:764px;top:294px;width:170px;height:25px;"><div style="position:absolute;left:5px;right:0px;top:3.0px;overflow:hidden;">МИНСКХЛЕБПРОМ ПО Х</div></div><div class="c" style="left:934px;top:294px;width:170px;height:25px;"><div style="position:absolute;left:5px;right:0px;top:3.0px;overflow:hidden;">Склад МИНСКХЛЕБПРОМ</div></div><div class="c" style="left:1104px;top:294px;width:170px;height:25px;"><div style="position:absolute;left:5px;right:0px;top:3.0px;overflow:hidden;">ОДО &quot;ЛюксСофтСервис&quot;</div></div><div class="c" style="left:1274px;top:294px;width:170px;height:25px;"><div style="position:absolute;left:5px;right:0px;top:3.0px;overflow:hidden;">Магазин 12</div></div><div class="c" style="left:1444px;top:294px;width:249px;height:25px;"><div style="position:absolute;left:5px;right:0px;top:3.0px;overflow:hidden;">Поступление в магазин от поставщика</div></div><div class="c" style="left:1693px;top:294px;width:88px;height:25px;"><div style="position:absolute;left:5px;right:0px;top:3.0px;overflow:hidden;">Российский</div></div><div class="c" style="left:1781px;top:294px;width:49px;height:25px;"><div style="position:absolute;left:5px;right:0px;top:3.0px;overflow:hidden;"></div></div><div class="c" style="left:1830px;top:294px;width:64px;height:25px;"><div style="position:absolute;left:5px;right:0px;top:3.0px;overflow:hidden;"></div></div><svg class="a" style="left:292px;top:324px;" width="15" height="15" viewBox="0 0 15 15" fill="none" stroke-linecap="round" stroke-linejoin="round"><rect x="0.9" y="0.9" width="13.2" height="13.2" rx="3" fill="#fff" stroke="#6a6a6a" stroke-width="1.8"/></svg><svg class="a" style="left:330px;top:324px;" width="15" height="15" viewBox="0 0 15 15" fill="none" stroke-linecap="round" stroke-linejoin="round"><rect x="0.9" y="0.9" width="13.2" height="13.2" rx="3" fill="#fff" stroke="#6a6a6a" stroke-width="1.8"/></svg><svg class="a" style="left:367px;top:324px;" width="15" height="15" viewBox="0 0 15 15" fill="none" stroke-linecap="round" stroke-linejoin="round"><rect x="0.9" y="0.9" width="13.2" height="13.2" rx="3" fill="#fff" stroke="#6a6a6a" stroke-width="1.8"/></svg><svg class="a" style="left:405px;top:324px;" width="15" height="15" viewBox="0 0 15 15" fill="none" stroke-linecap="round" stroke-linejoin="round"><rect x="0.9" y="0.9" width="13.2" height="13.2" rx="3" fill="#fff" stroke="#6a6a6a" stroke-width="1.8"/></svg><svg class="a" style="left:442px;top:324px;" width="15" height="15" viewBox="0 0 15 15" fill="none" stroke-linecap="round" stroke-linejoin="round"><rect x="0.9" y="0.9" width="13.2" height="13.2" rx="3" fill="#fff" stroke="#6a6a6a" stroke-width="1.8"/></svg><div class="c" style="left:468px;top:320px;width:128px;height:25px;background:#d4fcd4;"><div style="position:absolute;left:5px;right:0px;top:3.0px;overflow:hidden;">В работе</div></div><div class="c" style="left:596px;top:320px;width:73px;height:25px;"><div style="position:absolute;left:5px;right:0px;top:3.0px;overflow:hidden;">11095</div></div><div class="c" style="left:669px;top:320px;width:31px;height:25px;"><div style="position:absolute;left:5px;right:0px;top:3.0px;overflow:hidden;">ЗК</div></div><div class="c" style="left:700px;top:320px;width:64px;height:25px;"><div style="position:absolute;left:5px;right:0px;top:3.0px;overflow:hidden;">24.11.21</div></div><div class="c" style="left:764px;top:320px;width:170px;height:25px;"><div style="position:absolute;left:5px;right:0px;top:3.0px;overflow:hidden;">АВАЛОНТОРГ ООО</div></div><div class="c" style="left:934px;top:320px;width:170px;height:25px;"><div style="position:absolute;left:5px;right:0px;top:3.0px;overflow:hidden;">Склад АВАЛОНТОРГ ООО</div></div><div class="c" style="left:1104px;top:320px;width:170px;height:25px;"><div style="position:absolute;left:5px;right:0px;top:3.0px;overflow:hidden;">Фрегат-Плюс</div></div><div class="c" style="left:1274px;top:320px;width:170px;height:25px;"><div style="position:absolute;left:5px;right:0px;top:3.0px;overflow:hidden;">Склад Фрегат-Плюс</div></div><div class="c" style="left:1444px;top:320px;width:249px;height:25px;"><div style="position:absolute;left:5px;right:0px;top:3.0px;overflow:hidden;">Поступление в магазин от поставщика</div></div><div class="c" style="left:1693px;top:320px;width:88px;height:25px;"><div style="position:absolute;left:5px;right:0px;top:3.0px;overflow:hidden;">Российский</div></div><div class="c" style="left:1781px;top:320px;width:49px;height:25px;"><div style="position:absolute;left:5px;right:0px;top:3.0px;overflow:hidden;">Соглашение</div></div><div class="c" style="left:1830px;top:320px;width:64px;height:25px;"><div style="position:absolute;left:5px;right:0px;top:3.0px;overflow:hidden;">Д1</div></div><svg class="a" style="left:292px;top:350px;" width="15" height="15" viewBox="0 0 15 15" fill="none" stroke-linecap="round" stroke-linejoin="round"><rect x="0.9" y="0.9" width="13.2" height="13.2" rx="3" fill="#fff" stroke="#6a6a6a" stroke-width="1.8"/></svg><div class="a" style="left:318px;top:346px;width:37px;height:25px;background:#80e1fa"></div><svg class="a" style="left:330px;top:350px;" width="15" height="15" viewBox="0 0 15 15" fill="none" stroke-linecap="round" stroke-linejoin="round"><rect x="0.9" y="0.9" width="13.2" height="13.2" rx="3" fill="#fff" stroke="#6a6a6a" stroke-width="1.8"/></svg><svg class="a" style="left:367px;top:350px;" width="15" height="15" viewBox="0 0 15 15" fill="none" stroke-linecap="round" stroke-linejoin="round"><rect x="0.9" y="0.9" width="13.2" height="13.2" rx="3" fill="#fff" stroke="#6a6a6a" stroke-width="1.8"/></svg><svg class="a" style="left:405px;top:350px;" width="15" height="15" viewBox="0 0 15 15" fill="none" stroke-linecap="round" stroke-linejoin="round"><rect x="0.9" y="0.9" width="13.2" height="13.2" rx="3" fill="#fff" stroke="#6a6a6a" stroke-width="1.8"/></svg><svg class="a" style="left:442px;top:350px;" width="15" height="15" viewBox="0 0 15 15" fill="none" stroke-linecap="round" stroke-linejoin="round"><rect x="0.9" y="0.9" width="13.2" height="13.2" rx="3" fill="#fff" stroke="#6a6a6a" stroke-width="1.8"/></svg><div class="c" style="left:468px;top:346px;width:128px;height:25px;"><div style="position:absolute;left:5px;right:0px;top:3.0px;overflow:hidden;">Создан</div></div><div class="c" style="left:596px;top:346px;width:73px;height:25px;background:#80e1fa;"><div style="position:absolute;left:5px;right:0px;top:3.0px;overflow:hidden;"></div></div><div class="c" style="left:669px;top:346px;width:31px;height:25px;background:#80e1fa;"><div style="position:absolute;left:5px;right:0px;top:3.0px;overflow:hidden;"></div></div><div class="c" style="left:700px;top:346px;width:64px;height:25px;background:#80e1fa;"><div style="position:absolute;left:5px;right:0px;top:3.0px;overflow:hidden;">24.11.21</div></div><div class="c" style="left:764px;top:346px;width:170px;height:25px;background:#80e1fa;"><div style="position:absolute;left:5px;right:0px;top:3.0px;overflow:hidden;">РАКАН-КРУПЯНОЙ ДОМ</div></div><div class="c" style="left:934px;top:346px;width:170px;height:25px;background:#80e1fa;"><div style="position:absolute;left:5px;right:0px;top:3.0px;overflow:hidden;">Склад РАКАН-КРУПЯНОЙ</div></div><div class="c" style="left:1104px;top:346px;width:170px;height:25px;background:#80e1fa;"><div style="position:absolute;left:5px;right:0px;top:3.0px;overflow:hidden;">ЗАО &quot;ЛюксСофтТорг&quot;</div></div><div class="c" style="left:1274px;top:346px;width:170px;height:25px;background:#80e1fa;"><div style="position:absolute;left:5px;right:0px;top:3.0px;overflow:hidden;">Торговый</div></div><div class="c" style="left:1444px;top:346px;width:249px;height:25px;"><div style="position:absolute;left:5px;right:0px;top:3.0px;overflow:hidden;">Поступление в магазин от поставщика</div></div><div class="c" style="left:1693px;top:346px;width:88px;height:25px;background:#80e1fa;"><div style="position:absolute;left:5px;right:0px;top:3.0px;overflow:hidden;">Российский</div></div><div class="c" style="left:1781px;top:346px;width:49px;height:25px;background:#80e1fa;"><div style="position:absolute;left:5px;right:0px;top:3.0px;overflow:hidden;">Ракан</div></div><div class="c" style="left:1830px;top:346px;width:64px;height:25px;background:#80e1fa;"><div style="position:absolute;left:5px;right:0px;top:3.0px;overflow:hidden;">ДП000023</div></div><div class="a" style="left:1894px;top:346px;width:5px;height:25px;background:#80e1fa"></div><svg class="a" style="left:292px;top:376px;" width="15" height="15" viewBox="0 0 15 15" fill="none" stroke-linecap="round" stroke-linejoin="round"><rect x="0.9" y="0.9" width="13.2" height="13.2" rx="3" fill="#fff" stroke="#6a6a6a" stroke-width="1.8"/></svg><svg class="a" style="left:330px;top:376px;" width="15" height="15" viewBox="0 0 15 15" fill="none" stroke-linecap="round" stroke-linejoin="round"><rect x="0.9" y="0.9" width="13.2" height="13.2" rx="3" fill="#fff" stroke="#6a6a6a" stroke-width="1.8"/></svg><svg class="a" style="left:367px;top:376px;" width="15" height="15" viewBox="0 0 15 15" fill="none" stroke-linecap="round" stroke-linejoin="round"><rect x="0.9" y="0.9" width="13.2" height="13.2" rx="3" fill="#fff" stroke="#6a6a6a" stroke-width="1.8"/></svg><svg class="a" style="left:405px;top:376px;" width="15" height="15" viewBox="0 0 15 15" fill="none" stroke-linecap="round" stroke-linejoin="round"><rect x="0.9" y="0.9" width="13.2" height="13.2" rx="3" fill="#fff" stroke="#6a6a6a" stroke-width="1.8"/></svg><svg class="a" style="left:442px;top:376px;" width="15" height="15" viewBox="0 0 15 15" fill="none" stroke-linecap="round" stroke-linejoin="round"><rect x="0.9" y="0.9" width="13.2" height="13.2" rx="3" fill="#fff" stroke="#6a6a6a" stroke-width="1.8"/></svg><div class="c" style="left:468px;top:372px;width:128px;height:26px;background:#d4fcd4;"><div style="position:absolute;left:5px;right:0px;top:3.5px;overflow:hidden;">Принят</div></div><div class="c" style="left:596px;top:372px;width:73px;height:26px;"><div style="position:absolute;left:5px;right:0px;top:3.5px;overflow:hidden;">11097</div></div><div class="c" style="left:669px;top:372px;width:31px;height:26px;"><div style="position:absolute;left:5px;right:0px;top:3.5px;overflow:hidden;">ЗК</div></div><div class="c" style="left:700px;top:372px;width:64px;height:26px;"><div style="position:absolute;left:5px;right:0px;top:3.5px;overflow:hidden;">24.11.21</div></div><div class="c" style="left:764px;top:372px;width:170px;height:26px;"><div style="position:absolute;left:5px;right:0px;top:3.5px;overflow:hidden;">АВРАСТОРГ ООО</div></div><div class="c" style="left:934px;top:372px;width:170px;height:26px;"><div style="position:absolute;left:5px;right:0px;top:3.5px;overflow:hidden;">Склад АВРАСТОРГ ООО</div></div><div class="c" style="left:1104px;top:372px;width:170px;height:26px;"><div style="position:absolute;left:5px;right:0px;top:3.5px;overflow:hidden;">Фрегат-Плюс</div></div><div class="c" style="left:1274px;top:372px;width:170px;height:26px;"><div style="position:absolute;left:5px;right:0px;top:3.5px;overflow:hidden;">Склад Фрегат-Плюс</div></div><div class="c" style="left:1444px;top:372px;width:249px;height:26px;"><div style="position:absolute;left:5px;right:0px;top:3.5px;overflow:hidden;">Поступление в магазин от поставщика</div></div><div class="c" style="left:1693px;top:372px;width:88px;height:26px;"><div style="position:absolute;left:5px;right:0px;top:3.5px;overflow:hidden;">Российский</div></div><div class="c" style="left:1781px;top:372px;width:49px;height:26px;"><div style="position:absolute;left:5px;right:0px;top:3.5px;overflow:hidden;"></div></div><div class="c" style="left:1830px;top:372px;width:64px;height:26px;"><div style="position:absolute;left:5px;right:0px;top:3.5px;overflow:hidden;"></div></div><svg class="a" style="left:292px;top:403px;" width="15" height="15" viewBox="0 0 15 15" fill="none" stroke-linecap="round" stroke-linejoin="round"><rect x="0.9" y="0.9" width="13.2" height="13.2" rx="3" fill="#fff" stroke="#6a6a6a" stroke-width="1.8"/></svg><svg class="a" style="left:330px;top:403px;" width="15" height="15" viewBox="0 0 15 15" fill="none" stroke-linecap="round" stroke-linejoin="round"><rect x="0.9" y="0.9" width="13.2" height="13.2" rx="3" fill="#fff" stroke="#6a6a6a" stroke-width="1.8"/></svg><svg class="a" style="left:367px;top:403px;" width="15" height="15" viewBox="0 0 15 15" fill="none" stroke-linecap="round" stroke-linejoin="round"><rect x="0.9" y="0.9" width="13.2" height="13.2" rx="3" fill="#fff" stroke="#6a6a6a" stroke-width="1.8"/></svg><svg class="a" style="left:405px;top:403px;" width="15" height="15" viewBox="0 0 15 15" fill="none" stroke-linecap="round" stroke-linejoin="round"><rect x="0.9" y="0.9" width="13.2" height="13.2" rx="3" fill="#fff" stroke="#6a6a6a" stroke-width="1.8"/></svg><svg class="a" style="left:442px;top:403px;" width="15" height="15" viewBox="0 0 15 15" fill="none" stroke-linecap="round" stroke-linejoin="round"><rect x="0.9" y="0.9" width="13.2" height="13.2" rx="3" fill="#fff" stroke="#6a6a6a" stroke-width="1.8"/></svg><div class="c" style="left:468px;top:399px;width:128px;height:25px;background:#d4fcd4;"><div style="position:absolute;left:5px;right:0px;top:3.0px;overflow:hidden;">Принят</div></div><div class="c" style="left:596px;top:399px;width:73px;height:25px;"><div style="position:absolute;left:5px;right:0px;top:3.0px;overflow:hidden;">11098</div></div><div class="c" style="left:669px;top:399px;width:31px;height:25px;"><div style="position:absolute;left:5px;right:0px;top:3.0px;overflow:hidden;">ЗК</div></div><div class="c" style="left:700px;top:399px;width:64px;height:25px;"><div style="position:absolute;left:5px;right:0px;top:3.0px;overflow:hidden;">24.11.21</div></div><div class="c" style="left:764px;top:399px;width:170px;height:25px;"><div style="position:absolute;left:5px;right:0px;top:3.0px;overflow:hidden;">АВАЛОНТОРГ ООО</div></div><div class="c" style="left:934px;top:399px;width:170px;height:25px;"><div style="position:absolute;left:5px;right:0px;top:3.0px;overflow:hidden;">Склад АВАЛОНТОРГ ООО</div></div><div class="c" style="left:1104px;top:399px;width:170px;height:25px;"><div style="position:absolute;left:5px;right:0px;top:3.0px;overflow:hidden;">Фрегат-Плюс</div></div><div class="c" style="left:1274px;top:399px;width:170px;height:25px;"><div style="position:absolute;left:5px;right:0px;top:3.0px;overflow:hidden;">Фрегат 2</div></div><div class="c" style="left:1444px;top:399px;width:249px;height:25px;"><div style="position:absolute;left:5px;right:0px;top:3.0px;overflow:hidden;">Поступление в магазин от поставщика</div></div><div class="c" style="left:1693px;top:399px;width:88px;height:25px;"><div style="position:absolute;left:5px;right:0px;top:3.0px;overflow:hidden;">Российский</div></div><div class="c" style="left:1781px;top:399px;width:49px;height:25px;"><div style="position:absolute;left:5px;right:0px;top:3.0px;overflow:hidden;"></div></div><div class="c" style="left:1830px;top:399px;width:64px;height:25px;"><div style="position:absolute;left:5px;right:0px;top:3.0px;overflow:hidden;">Д1</div></div><svg class="a" style="left:292px;top:429px;" width="15" height="15" viewBox="0 0 15 15" fill="none" stroke-linecap="round" stroke-linejoin="round"><rect x="0.9" y="0.9" width="13.2" height="13.2" rx="3" fill="#fff" stroke="#6a6a6a" stroke-width="1.8"/></svg><svg class="a" style="left:330px;top:429px;" width="15" height="15" viewBox="0 0 15 15" fill="none" stroke-linecap="round" stroke-linejoin="round"><rect x="0.9" y="0.9" width="13.2" height="13.2" rx="3" fill="#fff" stroke="#6a6a6a" stroke-width="1.8"/></svg><svg class="a" style="left:367px;top:429px;" width="15" height="15" viewBox="0 0 15 15" fill="none" stroke-linecap="round" stroke-linejoin="round"><rect x="0.9" y="0.9" width="13.2" height="13.2" rx="3" fill="#fff" stroke="#6a6a6a" stroke-width="1.8"/></svg><svg class="a" style="left:405px;top:429px;" width="15" height="15" viewBox="0 0 15 15" fill="none" stroke-linecap="round" stroke-linejoin="round"><rect x="0.9" y="0.9" width="13.2" height="13.2" rx="3" fill="#fff" stroke="#6a6a6a" stroke-width="1.8"/></svg><svg class="a" style="left:442px;top:429px;" width="15" height="15" viewBox="0 0 15 15" fill="none" stroke-linecap="round" stroke-linejoin="round"><rect x="0.9" y="0.9" width="13.2" height="13.2" rx="3" fill="#fff" stroke="#6a6a6a" stroke-width="1.8"/></svg><div class="c" style="left:468px;top:425px;width:128px;height:25px;background:#d4fcd4;"><div style="position:absolute;left:5px;right:0px;top:3.0px;overflow:hidden;">Принят</div></div><div class="c" style="left:596px;top:425px;width:73px;height:25px;"><div style="position:absolute;left:5px;right:0px;top:3.0px;overflow:hidden;">11099</div></div><div class="c" style="left:669px;top:425px;width:31px;height:25px;"><div style="position:absolute;left:5px;right:0px;top:3.0px;overflow:hidden;">ЗК</div></div><div class="c" style="left:700px;top:425px;width:64px;height:25px;"><div style="position:absolute;left:5px;right:0px;top:3.0px;overflow:hidden;">24.11.21</div></div><div class="c" style="left:764px;top:425px;width:170px;height:25px;"><div style="position:absolute;left:5px;right:0px;top:3.0px;overflow:hidden;">АВАЛОНТОРГ ООО</div></div><div class="c" style="left:934px;top:425px;width:170px;height:25px;"><div style="position:absolute;left:5px;right:0px;top:3.0px;overflow:hidden;">Склад АВАЛОНТОРГ ООО</div></div><div class="c" style="left:1104px;top:425px;width:170px;height:25px;"><div style="position:absolute;left:5px;right:0px;top:3.0px;overflow:hidden;">Фрегат-Плюс</div></div><div class="c" style="left:1274px;top:425px;width:170px;height:25px;"><div style="position:absolute;left:5px;right:0px;top:3.0px;overflow:hidden;">Фрегат 3</div></div><div class="c" style="left:1444px;top:425px;width:249px;height:25px;"><div style="position:absolute;left:5px;right:0px;top:3.0px;overflow:hidden;">Поступление в магазин от поставщика</div></div><div class="c" style="left:1693px;top:425px;width:88px;height:25px;"><div style="position:absolute;left:5px;right:0px;top:3.0px;overflow:hidden;">Российский</div></div><div class="c" style="left:1781px;top:425px;width:49px;height:25px;"><div style="position:absolute;left:5px;right:0px;top:3.0px;overflow:hidden;"></div></div><div class="c" style="left:1830px;top:425px;width:64px;height:25px;"><div style="position:absolute;left:5px;right:0px;top:3.0px;overflow:hidden;">Д1</div></div><div class="a" style="left:281px;top:451px;width:37px;height:25px;background:#80e1fa"></div><svg class="a" style="left:292px;top:455px;" width="15" height="15" viewBox="0 0 15 15" fill="none" stroke-linecap="round" stroke-linejoin="round"><rect x="0.9" y="0.9" width="13.2" height="13.2" rx="3" fill="#fff" stroke="#6a6a6a" stroke-width="1.8"/></svg><div class="a" style="left:318px;top:451px;width:37px;height:25px;background:#80e1fa"></div><svg class="a" style="left:330px;top:455px;" width="15" height="15" viewBox="0 0 15 15" fill="none" stroke-linecap="round" stroke-linejoin="round"><rect x="0.9" y="0.9" width="13.2" height="13.2" rx="3" fill="#fff" stroke="#6a6a6a" stroke-width="1.8"/></svg><div class="a" style="left:355px;top:451px;width:38px;height:25px;background:#80e1fa"></div><svg class="a" style="left:367px;top:455px;" width="15" height="15" viewBox="0 0 15 15" fill="none" stroke-linecap="round" stroke-linejoin="round"><rect x="0.9" y="0.9" width="13.2" height="13.2" rx="3" fill="#fff" stroke="#6a6a6a" stroke-width="1.8"/></svg><div class="a" style="left:393px;top:451px;width:37px;height:25px;background:#80e1fa"></div><div class="a" style="left:405px;top:455px;width:15px;height:15px;background:#1a73e8;border-radius:3px"></div><svg class="a" style="left:405px;top:455px;" width="15" height="15" viewBox="0 0 15 15" fill="none" stroke-linecap="round" stroke-linejoin="round"><path d="M3.5 7.5 L6.3 10.5 L11.5 4.2" stroke="#fff" stroke-width="2.2"/></svg><div class="a" style="left:430px;top:451px;width:38px;height:25px;background:#80e1fa"></div><svg class="a" style="left:442px;top:455px;" width="15" height="15" viewBox="0 0 15 15" fill="none" stroke-linecap="round" stroke-linejoin="round"><rect x="0.9" y="0.9" width="13.2" height="13.2" rx="3" fill="#fff" stroke="#6a6a6a" stroke-width="1.8"/></svg><div class="c" style="left:468px;top:451px;width:128px;height:25px;background:#52e0d2;"><div style="position:absolute;left:5px;right:0px;top:3.0px;overflow:hidden;">В работе</div></div><div class="c" style="left:596px;top:451px;width:73px;height:25px;background:#80e1fa;"><div style="position:absolute;left:5px;right:0px;top:3.0px;overflow:hidden;">11103</div></div><div class="c" style="left:669px;top:451px;width:31px;height:25px;background:#80e1fa;"><div style="position:absolute;left:5px;right:0px;top:3.0px;overflow:hidden;">ЗК</div></div><div class="c" style="left:700px;top:451px;width:64px;height:25px;background:#80e1fa;"><div style="position:absolute;left:5px;right:0px;top:3.0px;overflow:hidden;">24.11.21</div></div><div class="c" style="left:764px;top:451px;width:170px;height:25px;background:#80e1fa;"><div style="position:absolute;left:5px;right:0px;top:3.0px;overflow:hidden;">ПЕРСПЕКТИВА ООО</div></div><div class="c" style="left:934px;top:451px;width:170px;height:25px;background:#80e1fa;"><div style="position:absolute;left:5px;right:0px;top:3.0px;overflow:hidden;">Оптовый склад 1</div></div><div class="c" style="left:1104px;top:451px;width:170px;height:25px;background:#80e1fa;"><div style="position:absolute;left:5px;right:0px;top:3.0px;overflow:hidden;">ООО &quot;ЛюксСофтОпт&quot;</div></div><div class="c" style="left:1274px;top:451px;width:170px;height:25px;background:#80e1fa;"><div style="position:absolute;left:5px;right:0px;top:3.0px;overflow:hidden;">Магазин 9</div></div><div class="c" style="left:1444px;top:451px;width:249px;height:25px;background:#80e1fa;"><div style="position:absolute;left:5px;right:0px;top:3.0px;overflow:hidden;">Поступление в магазин от поставщика</div></div><div class="c" style="left:1693px;top:451px;width:88px;height:25px;background:#80e1fa;"><div style="position:absolute;left:5px;right:0px;top:3.0px;overflow:hidden;">Российский</div></div><div class="c" style="left:1781px;top:451px;width:49px;height:25px;background:#80e1fa;"><div style="position:absolute;left:5px;right:0px;top:3.0px;overflow:hidden;"></div></div><div class="c" style="left:1830px;top:451px;width:64px;height:25px;background:#80e1fa;"><div style="position:absolute;left:5px;right:0px;top:3.0px;overflow:hidden;"></div></div><div class="a" style="left:1894px;top:451px;width:5px;height:25px;background:#80e1fa"></div><div class="a" style="left:318px;top:226px;width:1px;height:250px;background:#dadada"></div><div class="a" style="left:355px;top:226px;width:1px;height:250px;background:#dadada"></div><div class="a" style="left:393px;top:226px;width:1px;height:250px;background:#dadada"></div><div class="a" style="left:430px;top:226px;width:1px;height:250px;background:#dadada"></div><div class="a" style="left:468px;top:226px;width:1px;height:250px;background:#dadada"></div><div class="a" style="left:596px;top:226px;width:1px;height:250px;background:#dadada"></div><div class="a" style="left:669px;top:226px;width:1px;height:250px;background:#dadada"></div><div class="a" style="left:700px;top:226px;width:1px;height:250px;background:#dadada"></div><div class="a" style="left:764px;top:226px;width:1px;height:250px;background:#dadada"></div><div class="a" style="left:934px;top:226px;width:1px;height:250px;background:#dadada"></div><div class="a" style="left:1104px;top:226px;width:1px;height:250px;background:#dadada"></div><div class="a" style="left:1274px;top:226px;width:1px;height:250px;background:#dadada"></div><div class="a" style="left:1444px;top:226px;width:1px;height:250px;background:#dadada"></div><div class="a" style="left:1693px;top:226px;width:1px;height:250px;background:#dadada"></div><div class="a" style="left:1781px;top:226px;width:1px;height:250px;background:#dadada"></div><div class="a" style="left:1830px;top:226px;width:1px;height:250px;background:#dadada"></div><div class="a" style="left:1894px;top:226px;width:1px;height:250px;background:#dadada"></div><div class="a" style="left:281px;top:293px;width:1618px;height:1px;background:#dadada"></div><div class="a" style="left:281px;top:319px;width:1618px;height:1px;background:#dadada"></div><div class="a" style="left:281px;top:345px;width:1618px;height:1px;background:#dadada"></div><div class="a" style="left:281px;top:371px;width:1618px;height:1px;background:#dadada"></div><div class="a" style="left:281px;top:398px;width:1618px;height:1px;background:#dadada"></div><div class="a" style="left:281px;top:424px;width:1618px;height:1px;background:#dadada"></div><div class="a" style="left:281px;top:450px;width:1618px;height:1px;background:#dadada"></div><div class="a" style="left:281px;top:476px;width:1618px;height:1px;background:#dadada"></div><div class="a" style="left:281px;top:269px;width:1628px;height:1px;background:#dadada"></div><div class="c" style="left:284px;top:238.5px;width:31px;height:20px;text-align:left;padding:0">Отм.</div><svg class="a" style="left:310px;top:262px;" width="7" height="7" viewBox="0 0 7 7" fill="none" stroke-linecap="round" stroke-linejoin="round"><path d="M7 0 L7 7 L0 7 Z" fill="#1b87c6"/></svg><div class="c" style="left:321px;top:238.5px;width:31px;height:20px;text-align:left;padding:0">Закр</div><svg class="a" style="left:347px;top:262px;" width="7" height="7" viewBox="0 0 7 7" fill="none" stroke-linecap="round" stroke-linejoin="round"><path d="M7 0 L7 7 L0 7 Z" fill="#1b87c6"/></svg><div class="c" style="left:358px;top:238.5px;width:32px;height:20px;text-align:left;padding:0">Отпр</div><div class="c" style="left:396px;top:238.5px;width:31px;height:20px;text-align:left;padding:0">Подт</div><div class="c" style="left:433px;top:238.5px;width:32px;height:20px;text-align:left;padding:0">Отме</div><div class="c" style="left:471px;top:238.5px;width:122px;height:20px;text-align:center;padding:0">Статус заказа</div><div class="c" style="left:599px;top:238.5px;width:67px;height:20px;text-align:center;padding:0">Номер</div><svg class="a" style="left:661px;top:262px;" width="7" height="7" viewBox="0 0 7 7" fill="none" stroke-linecap="round" stroke-linejoin="round"><path d="M7 0 L7 7 L0 7 Z" fill="#1b87c6"/></svg><div class="c" style="left:672px;top:238.5px;width:25px;height:20px;text-align:center;padding:0">Сер</div><svg class="a" style="left:692px;top:262px;" width="7" height="7" viewBox="0 0 7 7" fill="none" stroke-linecap="round" stroke-linejoin="round"><path d="M7 0 L7 7 L0 7 Z" fill="#1b87c6"/></svg><div class="c" style="left:703px;top:238.5px;width:58px;height:20px;text-align:center;padding:0">Дата</div><svg class="a" style="left:756px;top:262px;" width="7" height="7" viewBox="0 0 7 7" fill="none" stroke-linecap="round" stroke-linejoin="round"><path d="M7 0 L7 7 L0 7 Z" fill="#1b87c6"/></svg><div class="c" style="left:767px;top:238.5px;width:164px;height:20px;text-align:center;padding:0">Поставщик</div><svg class="a" style="left:926px;top:262px;" width="7" height="7" viewBox="0 0 7 7" fill="none" stroke-linecap="round" stroke-linejoin="round"><path d="M7 0 L7 7 L0 7 Z" fill="#1b87c6"/></svg><div class="c" style="left:937px;top:238.5px;width:164px;height:20px;text-align:center;padding:0">Склад поставщика</div><svg class="a" style="left:1096px;top:262px;" width="7" height="7" viewBox="0 0 7 7" fill="none" stroke-linecap="round" stroke-linejoin="round"><path d="M7 0 L7 7 L0 7 Z" fill="#1b87c6"/></svg><div class="c" style="left:1107px;top:238.5px;width:164px;height:20px;text-align:center;padding:0">Покупатель</div><svg class="a" style="left:1266px;top:262px;" width="7" height="7" viewBox="0 0 7 7" fill="none" stroke-linecap="round" stroke-linejoin="round"><path d="M7 0 L7 7 L0 7 Z" fill="#1b87c6"/></svg><div class="c" style="left:1277px;top:238.5px;width:164px;height:20px;text-align:center;padding:0">Склад покупателя</div><svg class="a" style="left:1436px;top:262px;" width="7" height="7" viewBox="0 0 7 7" fill="none" stroke-linecap="round" stroke-linejoin="round"><path d="M7 0 L7 7 L0 7 Z" fill="#1b87c6"/></svg><div class="c" style="left:1447px;top:238.5px;width:243px;height:20px;text-align:center;padding:0">Операция</div><svg class="a" style="left:1685px;top:262px;" width="7" height="7" viewBox="0 0 7 7" fill="none" stroke-linecap="round" stroke-linejoin="round"><path d="M7 0 L7 7 L0 7 Z" fill="#1b87c6"/></svg><div class="c" style="left:1696px;top:238.5px;width:82px;height:20px;text-align:center;padding:0">Валюта</div><svg class="a" style="left:1773px;top:262px;" width="7" height="7" viewBox="0 0 7 7" fill="none" stroke-linecap="round" stroke-linejoin="round"><path d="M7 0 L7 7 L0 7 Z" fill="#1b87c6"/></svg><div class="c" style="left:1784px;top:238.5px;width:43px;height:20px;text-align:center;padding:0">Согла</div><svg class="a" style="left:1822px;top:262px;" width="7" height="7" viewBox="0 0 7 7" fill="none" stroke-linecap="round" stroke-linejoin="round"><path d="M7 0 L7 7 L0 7 Z" fill="#1b87c6"/></svg><div class="c" style="left:1833px;top:229px;width:58px;height:42px;text-align:center;line-height:20.5px;padding:0">Номер<br>договор.</div><svg class="a" style="left:1886px;top:262px;" width="7" height="7" viewBox="0 0 7 7" fill="none" stroke-linecap="round" stroke-linejoin="round"><path d="M7 0 L7 7 L0 7 Z" fill="#1b87c6"/></svg><div class="c" style="left:1899px;top:238.5px;width:10px;height:20px;padding:0 0 0 7px">Н</div><div class="a" style="left:281px;top:478px;width:850px;height:10px;background:#d9d9d9"></div><div class="a" style="left:1900px;top:352px;width:9px;height:126px;background:#d9d9d9"></div><div class="a" style="left:1899px;top:269px;width:1px;height:1px;"></div><div class="a" style="left:280px;top:494px;width:28px;height:27px;background:#d3e3e9;border:1px solid #c8d6dc;border-radius:5px"></div><div class="a" style="left:416px;top:494px;width:28px;height:27px;background:#d3e3e9;border:1px solid #c8d6dc;border-radius:5px"></div><div class="a" style="left:378px;top:494px;width:1px;height:27px;background:#cfcfcf"></div><div class="a" style="left:449px;top:494px;width:1px;height:27px;background:#cfcfcf"></div><div class="a" style="left:520px;top:494px;width:1px;height:27px;background:#cfcfcf"></div><div class="a" style="left:559px;top:494px;width:1px;height:27px;background:#cfcfcf"></div><svg class="a" style="left:0;top:0" width="1917" height="968" viewBox="0 0 1917 968" fill="none" stroke-linecap="round" stroke-linejoin="round"><circle cx="286.4" cy="501.5" r="1.9" stroke="#4ec3ef" stroke-width="1.6" fill="#a6def4"/><path d="M292.2 502.1 H303.7" stroke="#3c3c3c" stroke-width="2" fill="none" /><circle cx="286.4" cy="507.7" r="1.9" stroke="#4ec3ef" stroke-width="1.6" fill="#a6def4"/><path d="M292.2 508.3 H303.7" stroke="#3c3c3c" stroke-width="2" fill="none" /><circle cx="286.4" cy="514.0" r="1.9" stroke="#4ec3ef" stroke-width="1.6" fill="#a6def4"/><path d="M292.2 514.6 H303.7" stroke="#3c3c3c" stroke-width="2" fill="none" /><path d="M323.0 498.4 V517.5 M329.0 498.4 V517.5 M316.3 504.59999999999997 H335.6 M316.3 511.09999999999997 H335.6" stroke="#4ec3ef" stroke-width="1.8" fill="none" /><path d="M316.3 498.4 H335.6 V517.5 H316.3 Z" stroke="#3c3c3c" stroke-width="2" fill="none" stroke-linejoin="miter"/><path d="M351.4 500.59999999999997 H366.59999999999997 Q368.59999999999997 500.59999999999997 368.59999999999997 502.59999999999997 V515.5 Q368.59999999999997 517.5 366.59999999999997 517.5 H351.4 Q349.4 517.5 349.4 515.5 V502.59999999999997 Q349.4 500.59999999999997 351.4 500.59999999999997 Z M349.4 504.2 H368.59999999999997 M354.7 498.4 V500.59999999999997 M363.29999999999995 498.4 V500.59999999999997" stroke="#3c3c3c" stroke-width="1.9" fill="none" /><path d="M352.5 511.09999999999997 H365.79999999999995 M355.9 507.7 V514.4 M361.79999999999995 507.7 V514.4" stroke="#4ec3ef" stroke-width="1.9" fill="none" /><path d="M388.4 501.09999999999997 H407.5 M393.7 511.09999999999997 H402.2" stroke="#3c3c3c" stroke-width="2" fill="none" /><path d="M390.79999999999995 506.09999999999997 H405.0 M396.0 516.2 H400.4" stroke="#4ec3ef" stroke-width="2" fill="none" /><path d="M436.18 506.01 L438.89 506.26 L438.89 509.14 L436.18 509.39 L435.51 511.01 L437.24 513.11 L435.21 515.14 L433.11 513.41 L431.49 514.08 L431.24 516.79 L428.36 516.79 L428.11 514.08 L426.49 513.41 L424.39 515.14 L422.36 513.11 L424.09 511.01 L423.42 509.39 L420.71 509.14 L420.71 506.26 L423.42 506.01 L424.09 504.39 L422.36 502.29 L424.39 500.26 L426.49 501.99 L428.11 501.32 L428.36 498.61 L431.24 498.61 L431.49 501.32 L433.11 501.99 L435.21 500.26 L437.24 502.29 L435.51 504.39 Z" stroke="#3c3c3c" stroke-width="1.9" fill="none" /><circle cx="429.8" cy="507.7" r="2.8" stroke="#4ec3ef" stroke-width="1.9" fill="none"/><text x="461.8" y="502.09999999999997" font-family="Liberation Sans" font-size="6.5" font-weight="bold" fill="#4ec3ef" text-anchor="middle">1</text><text x="461.8" y="510.09999999999997" font-family="Liberation Sans" font-size="6.5" font-weight="bold" fill="#4ec3ef" text-anchor="middle">2</text><text x="461.8" y="517.9" font-family="Liberation Sans" font-size="6.5" font-weight="bold" fill="#4ec3ef" text-anchor="middle">3</text><path d="M467.3 500.9 H478.6 M467.3 508.5 H478.6 M467.3 516.0 H478.6" stroke="#3c3c3c" stroke-width="2" fill="none" /><path d="M491.1 499.9 H510.70000000000005 M491.1 504.8 H510.70000000000005 M491.1 509.8 H499.3 M491.1 514.8 H499.3" stroke="#3c3c3c" stroke-width="1.9" fill="none" /><path d="M506.5 508.2 V516.8 M502.20000000000005 512.5 H510.8" stroke="#4ec3ef" stroke-width="1.9" fill="none" /><path d="M537.7 502.09999999999997 H533.5 Q530.5 502.09999999999997 530.5 505.09999999999997 V513.7 Q530.5 516.7 533.5 516.7 H542.5 Q545.5 516.7 545.5 513.7 V509.5" stroke="#3c3c3c" stroke-width="2" fill="none" /><path d="M539.5 508.3 L549.3 498.8 M542.7 498.5 H549.5 V505.09999999999997" stroke="#4ec3ef" stroke-width="2" fill="none" /><path d="M572.2 513.8 H569.4 V502.09999999999997 H585.6 M582.6 498.5 L586 502.09999999999997 L582.6 505.7" stroke="#3c3c3c" stroke-width="2" fill="none" /><path d="M585.8 502.5 H588.6 V513.8 H575.6 M579 510.3 L575.6 513.8 L579 517.3" stroke="#4ec3ef" stroke-width="2" fill="none" /></svg><div class="a" style="left:1176px;top:500px;width:15px;height:15px;background:#1a73e8;border-radius:3px"></div><svg class="a" style="left:1176px;top:500px;" width="15" height="15" viewBox="0 0 15 15" fill="none" stroke-linecap="round" stroke-linejoin="round"><path d="M3.5 7.5 L6.3 10.5 L11.5 4.2" stroke="#fff" stroke-width="2.2"/></svg><div class="a t" style="left:1196.3px;top:498.5px;font-size:14.3px;color:#000;">Открыт (F6)</div><svg class="a" style="left:1285px;top:500px;" width="15" height="15" viewBox="0 0 15 15" fill="none" stroke-linecap="round" stroke-linejoin="round"><rect x="0.9" y="0.9" width="13.2" height="13.2" rx="3" fill="#fff" stroke="#6a6a6a" stroke-width="1.8"/></svg><div class="a t" style="left:1305px;top:498.5px;font-size:14.3px;color:#000;">Автозаказ (F7)</div><div class="a" style="left:1407px;top:494px;width:94px;height:27px;background:#fff;border:1px solid #c8c8c8;border-radius:4px"></div><div class="a" style="left:1506px;top:494px;width:122px;height:27px;background:#fff;border:1px solid #c8c8c8;border-radius:4px"></div><div class="a" style="left:1634px;top:494px;width:158px;height:27px;background:#fff;border:1px solid #c8c8c8;border-radius:4px"></div><div class="a" style="left:1798px;top:494px;width:111px;height:27px;background:#fff;border:1px solid #c8c8c8;border-radius:4px"></div><div class="a t" style="left:1426px;top:498.5px;font-size:14.5px;color:#000;">Закрыть</div><div class="a t" style="left:1544.6px;top:498.5px;font-size:14.5px;color:#000;">Добавить</div><div class="a t" style="left:1673.4px;top:498.5px;font-size:14.5px;color:#000;">Редактировать</div><div class="a t" style="left:1836.7px;top:498.5px;font-size:14.5px;color:#000;">Удалить</div><svg class="a" style="left:0;top:0" width="1917" height="968" viewBox="0 0 1917 968" fill="none" stroke-linecap="round" stroke-linejoin="round"><path d="M1534.5 501.4 V513.6 M1528.4 507.5 H1540.6" stroke="#3c3c3c" stroke-width="2.2" fill="none" /><path d="M1657.2 511.6 L1665.6 501.6 Q1667 500.4 1668.3 501.6 Q1669.3 503 1668.1 504.4 L1659.6 513.6 L1656.4 514.2 Z" stroke="#3c3c3c" stroke-width="1.6" fill="none" /><path d="M1655.2 515.2 H1668.6" stroke="#4ec3ef" stroke-width="1.6" fill="none" /><path d="M1820.4 507.5 H1832.6" stroke="#3c3c3c" stroke-width="2.2" fill="none" /></svg><div class="a" style="left:275px;top:556px;width:1639px;height:381px;border:1px solid #c6c6c6;border-radius:4px"></div><div class="a" style="left:283px;top:530px;width:130px;height:27px;background:#d3e3e9;border:1px solid #c8d6dc;border-bottom:none;border-radius:4px 4px 0 0"></div><div class="a" style="left:417px;top:530px;width:85px;height:27px;background:#f2f2f2;border:1px solid #c6c6c6;border-bottom:none;border-radius:4px 4px 0 0"></div><div class="a" style="left:506px;top:530px;width:92px;height:27px;background:#f2f2f2;border:1px solid #c6c6c6;border-bottom:none;border-radius:4px 4px 0 0"></div><div class="a t" style="left:296.6px;top:535px;font-size:14.5px;color:#000;">Спецификация</div><div class="a t" style="left:431px;top:535px;font-size:14.5px;color:#000;">История</div><div class="a t" style="left:520px;top:535px;font-size:14.5px;color:#000;">Действия</div><div class="a" style="left:280px;top:564px;width:1630px;height:335px;background:#fff;border:1px solid #c6c6c6;border-radius:4px"></div><div class="a" style="left:281px;top:565px;width:1628px;height:43px;background:#f2f2f2;border-radius:3px 3px 0 0"></div><div class="a" style="left:281px;top:609px;width:1618px;height:279px;overflow:hidden"><div class="c" style="left:0px;top:0px;width:72px;height:25px;background:#80e1fa;text-align:right;"><div style="position:absolute;left:5px;right:4px;top:3.0px;overflow:hidden;text-align:right;">1</div></div><div class="c" style="left:72px;top:0px;width:128px;height:25px;background:#80e1fa;"><div style="position:absolute;left:5px;right:0px;top:3.0px;overflow:hidden;">4813785001430</div></div><div class="c" style="left:200px;top:0px;width:89px;height:25px;background:#80e1fa;"><div style="position:absolute;left:5px;right:0px;top:3.0px;overflow:hidden;">14101</div></div><div class="c" style="left:289px;top:0px;width:250px;height:25px;background:#80e1fa;"><div style="position:absolute;left:5px;right:0px;top:3.0px;overflow:hidden;">КОФЕ МОЛ.БАРИСТА МИО Д/ЧАШКИ</div></div><div class="c" style="left:539px;top:0px;width:31px;height:25px;background:#80e1fa;"><div style="position:absolute;left:5px;right:0px;top:3.0px;overflow:hidden;">шт</div></div><div class="c" style="left:570px;top:0px;width:171px;height:25px;background:#80e1fa;"><div style="position:absolute;left:5px;right:0px;top:3.0px;overflow:hidden;"></div></div><div class="c" style="left:741px;top:0px;width:128px;height:25px;background:#80e1fa;"><div style="position:absolute;left:5px;right:0px;top:3.0px;overflow:hidden;">4813785001430</div></div><div class="c" style="left:869px;top:0px;width:31px;height:25px;background:#80e1fa;"><div style="position:absolute;left:5px;right:0px;top:3.0px;overflow:hidden;">шт</div></div><div class="c" style="left:900px;top:0px;width:58px;height:25px;background:#80e1fa;text-align:right;"><div style="position:absolute;left:5px;right:4px;top:3.0px;overflow:hidden;text-align:right;">1</div></div><div class="c" style="left:958px;top:0px;width:63px;height:25px;background:#7f9f00;text-align:right;"><div style="position:absolute;left:5px;right:4px;top:3.0px;overflow:hidden;text-align:right;">1</div></div><div class="c" style="left:1021px;top:0px;width:66px;height:25px;background:#80e1fa;text-align:right;"><div style="position:absolute;left:5px;right:4px;top:3.0px;overflow:hidden;text-align:right;">1</div></div><div class="c" style="left:1087px;top:0px;width:64px;height:25px;background:#52e0d2;text-align:right;"><div style="position:absolute;left:5px;right:4px;top:3.0px;overflow:hidden;text-align:right;">1</div></div><div class="c" style="left:1151px;top:0px;width:66px;height:25px;background:#80e1fa;text-align:right;"><div style="position:absolute;left:5px;right:4px;top:3.0px;overflow:hidden;text-align:right;"></div></div><div class="c" style="left:1217px;top:0px;width:88px;height:25px;background:#80e1fa;"><div style="position:absolute;left:5px;right:0px;top:3.0px;overflow:hidden;">Поставщика</div></div><div class="c" style="left:1305px;top:0px;width:65px;height:25px;background:#52e0d2;text-align:right;"><div style="position:absolute;left:5px;right:4px;top:3.0px;overflow:hidden;text-align:right;">3,15</div></div><div class="c" style="left:1370px;top:0px;width:80px;height:25px;background:#80e1fa;text-align:right;"><div style="position:absolute;left:5px;right:4px;top:3.0px;overflow:hidden;text-align:right;">3,15</div></div><div class="c" style="left:1450px;top:0px;width:40px;height:25px;background:#80e1fa;text-align:right;"><div style="position:absolute;left:5px;right:4px;top:3.0px;overflow:hidden;text-align:right;">5</div></div><div class="c" style="left:1490px;top:0px;width:65px;height:25px;background:#80e1fa;text-align:right;"><div style="position:absolute;left:5px;right:4px;top:3.0px;overflow:hidden;text-align:right;">20</div></div><div class="c" style="left:1555px;top:0px;width:72px;height:25px;background:#80e1fa;text-align:right;"><div style="position:absolute;left:5px;right:4px;top:3.0px;overflow:hidden;text-align:right;">0,63</div></div><div class="c" style="left:0px;top:26px;width:72px;height:25px;text-align:right;"><div style="position:absolute;left:5px;right:4px;top:3.0px;overflow:hidden;text-align:right;">2</div></div><div class="c" style="left:72px;top:26px;width:128px;height:25px;"><div style="position:absolute;left:5px;right:0px;top:3.0px;overflow:hidden;">4810285005432</div></div><div class="c" style="left:200px;top:26px;width:89px;height:25px;"><div style="position:absolute;left:5px;right:0px;top:3.0px;overflow:hidden;">24332</div></div><div class="c" style="left:289px;top:26px;width:250px;height:25px;"><div style="position:absolute;left:5px;right:0px;top:3.0px;overflow:hidden;">ПИВО ЛИДСКОЕ ПРЕМИУМ Ж/Б 0.5Л</div></div><div class="c" style="left:539px;top:26px;width:31px;height:25px;"><div style="position:absolute;left:5px;right:0px;top:3.0px;overflow:hidden;">шт</div></div><div class="c" style="left:570px;top:26px;width:171px;height:25px;"><div style="position:absolute;left:5px;right:0px;top:3.0px;overflow:hidden;"></div></div><div class="c" style="left:741px;top:26px;width:128px;height:25px;"><div style="position:absolute;left:5px;right:0px;top:3.0px;overflow:hidden;"></div></div><div class="c" style="left:869px;top:26px;width:31px;height:25px;"><div style="position:absolute;left:5px;right:0px;top:3.0px;overflow:hidden;">шт</div></div><div class="c" style="left:900px;top:26px;width:58px;height:25px;text-align:right;"><div style="position:absolute;left:5px;right:4px;top:3.0px;overflow:hidden;text-align:right;">24</div></div><div class="c" style="left:958px;top:26px;width:63px;height:25px;background:#ffb900;text-align:right;"><div style="position:absolute;left:5px;right:4px;top:3.0px;overflow:hidden;text-align:right;">1</div></div><div class="c" style="left:1021px;top:26px;width:66px;height:25px;text-align:right;"><div style="position:absolute;left:5px;right:4px;top:3.0px;overflow:hidden;text-align:right;">24</div></div><div class="c" style="left:1087px;top:26px;width:64px;height:25px;background:#d4fcd4;text-align:right;"><div style="position:absolute;left:5px;right:4px;top:3.0px;overflow:hidden;text-align:right;">24</div></div><div class="c" style="left:1151px;top:26px;width:66px;height:25px;background:#fde0fc;text-align:right;"><div style="position:absolute;left:5px;right:4px;top:3.0px;overflow:hidden;text-align:right;"></div></div><div class="c" style="left:1217px;top:26px;width:88px;height:25px;"><div style="position:absolute;left:5px;right:0px;top:3.0px;overflow:hidden;">Поставщика</div></div><div class="c" style="left:1305px;top:26px;width:65px;height:25px;background:#d4fcd4;text-align:right;"><div style="position:absolute;left:5px;right:4px;top:3.0px;overflow:hidden;text-align:right;">0,9</div></div><div class="c" style="left:1370px;top:26px;width:80px;height:25px;text-align:right;"><div style="position:absolute;left:5px;right:4px;top:3.0px;overflow:hidden;text-align:right;">21,6</div></div><div class="c" style="left:1450px;top:26px;width:40px;height:25px;text-align:right;"><div style="position:absolute;left:5px;right:4px;top:3.0px;overflow:hidden;text-align:right;">5</div></div><div class="c" style="left:1490px;top:26px;width:65px;height:25px;text-align:right;"><div style="position:absolute;left:5px;right:4px;top:3.0px;overflow:hidden;text-align:right;">20</div></div><div class="c" style="left:1555px;top:26px;width:72px;height:25px;text-align:right;"><div style="position:absolute;left:5px;right:4px;top:3.0px;overflow:hidden;text-align:right;">4,32</div></div><div class="c" style="left:0px;top:52px;width:72px;height:26px;text-align:right;"><div style="position:absolute;left:5px;right:4px;top:3.5px;overflow:hidden;text-align:right;">3</div></div><div class="c" style="left:72px;top:52px;width:128px;height:26px;"><div style="position:absolute;left:5px;right:0px;top:3.5px;overflow:hidden;">4811222004068</div></div><div class="c" style="left:200px;top:52px;width:89px;height:26px;"><div style="position:absolute;left:5px;right:0px;top:3.5px;overflow:hidden;">24111</div></div><div class="c" style="left:289px;top:52px;width:250px;height:26px;"><div style="position:absolute;left:5px;right:0px;top:3.5px;overflow:hidden;">ПИВО БОБРОВ КРЕПКОЕ СВЕТЛОЕ Г</div></div><div class="c" style="left:539px;top:52px;width:31px;height:26px;"><div style="position:absolute;left:5px;right:0px;top:3.5px;overflow:hidden;">шт</div></div><div class="c" style="left:570px;top:52px;width:171px;height:26px;"><div style="position:absolute;left:5px;right:0px;top:3.5px;overflow:hidden;"></div></div><div class="c" style="left:741px;top:52px;width:128px;height:26px;"><div style="position:absolute;left:5px;right:0px;top:3.5px;overflow:hidden;"></div></div><div class="c" style="left:869px;top:52px;width:31px;height:26px;"><div style="position:absolute;left:5px;right:0px;top:3.5px;overflow:hidden;">шт</div></div><div class="c" style="left:900px;top:52px;width:58px;height:26px;text-align:right;"><div style="position:absolute;left:5px;right:4px;top:3.5px;overflow:hidden;text-align:right;">9</div></div><div class="c" style="left:958px;top:52px;width:63px;height:26px;background:#ffb900;text-align:right;"><div style="position:absolute;left:5px;right:4px;top:3.5px;overflow:hidden;text-align:right;">1</div></div><div class="c" style="left:1021px;top:52px;width:66px;height:26px;text-align:right;"><div style="position:absolute;left:5px;right:4px;top:3.5px;overflow:hidden;text-align:right;">9</div></div><div class="c" style="left:1087px;top:52px;width:64px;height:26px;background:#d4fcd4;text-align:right;"><div style="position:absolute;left:5px;right:4px;top:3.5px;overflow:hidden;text-align:right;">9</div></div><div class="c" style="left:1151px;top:52px;width:66px;height:26px;background:#fde0fc;text-align:right;"><div style="position:absolute;left:5px;right:4px;top:3.5px;overflow:hidden;text-align:right;"></div></div><div class="c" style="left:1217px;top:52px;width:88px;height:26px;"><div style="position:absolute;left:5px;right:0px;top:3.5px;overflow:hidden;">Поставщика</div></div><div class="c" style="left:1305px;top:52px;width:65px;height:26px;background:#d4fcd4;text-align:right;"><div style="position:absolute;left:5px;right:4px;top:3.5px;overflow:hidden;text-align:right;">1,24</div></div><div class="c" style="left:1370px;top:52px;width:80px;height:26px;text-align:right;"><div style="position:absolute;left:5px;right:4px;top:3.5px;overflow:hidden;text-align:right;">11,16</div></div><div class="c" style="left:1450px;top:52px;width:40px;height:26px;text-align:right;"><div style="position:absolute;left:5px;right:4px;top:3.5px;overflow:hidden;text-align:right;">5</div></div><div class="c" style="left:1490px;top:52px;width:65px;height:26px;text-align:right;"><div style="position:absolute;left:5px;right:4px;top:3.5px;overflow:hidden;text-align:right;">20</div></div><div class="c" style="left:1555px;top:52px;width:72px;height:26px;text-align:right;"><div style="position:absolute;left:5px;right:4px;top:3.5px;overflow:hidden;text-align:right;">2,23</div></div><div class="c" style="left:0px;top:79px;width:72px;height:25px;text-align:right;"><div style="position:absolute;left:5px;right:4px;top:3.0px;overflow:hidden;text-align:right;">4</div></div><div class="c" style="left:72px;top:79px;width:128px;height:25px;"><div style="position:absolute;left:5px;right:0px;top:3.0px;overflow:hidden;">4046234771411</div></div><div class="c" style="left:200px;top:79px;width:89px;height:25px;"><div style="position:absolute;left:5px;right:0px;top:3.0px;overflow:hidden;">14205</div></div><div class="c" style="left:289px;top:79px;width:250px;height:25px;"><div style="position:absolute;left:5px;right:0px;top:3.0px;overflow:hidden;">КОФЕ ЧИБО ГОЛД СЕЛЕКШН РАСТВ</div></div><div class="c" style="left:539px;top:79px;width:31px;height:25px;"><div style="position:absolute;left:5px;right:0px;top:3.0px;overflow:hidden;">шт</div></div><div class="c" style="left:570px;top:79px;width:171px;height:25px;"><div style="position:absolute;left:5px;right:0px;top:3.0px;overflow:hidden;"></div></div><div class="c" style="left:741px;top:79px;width:128px;height:25px;"><div style="position:absolute;left:5px;right:0px;top:3.0px;overflow:hidden;">4046234771411</div></div><div class="c" style="left:869px;top:79px;width:31px;height:25px;"><div style="position:absolute;left:5px;right:0px;top:3.0px;overflow:hidden;">шт</div></div><div class="c" style="left:900px;top:79px;width:58px;height:25px;text-align:right;"><div style="position:absolute;left:5px;right:4px;top:3.0px;overflow:hidden;text-align:right;">1</div></div><div class="c" style="left:958px;top:79px;width:63px;height:25px;background:#ffb900;text-align:right;"><div style="position:absolute;left:5px;right:4px;top:3.0px;overflow:hidden;text-align:right;">1</div></div><div class="c" style="left:1021px;top:79px;width:66px;height:25px;text-align:right;"><div style="position:absolute;left:5px;right:4px;top:3.0px;overflow:hidden;text-align:right;">1</div></div><div class="c" style="left:1087px;top:79px;width:64px;height:25px;background:#d4fcd4;text-align:right;"><div style="position:absolute;left:5px;right:4px;top:3.0px;overflow:hidden;text-align:right;">1</div></div><div class="c" style="left:1151px;top:79px;width:66px;height:25px;background:#fde0fc;text-align:right;"><div style="position:absolute;left:5px;right:4px;top:3.0px;overflow:hidden;text-align:right;"></div></div><div class="c" style="left:1217px;top:79px;width:88px;height:25px;"><div style="position:absolute;left:5px;right:0px;top:3.0px;overflow:hidden;">Поставщика</div></div><div class="c" style="left:1305px;top:79px;width:65px;height:25px;background:#d4fcd4;text-align:right;"><div style="position:absolute;left:5px;right:4px;top:3.0px;overflow:hidden;text-align:right;">3,28</div></div><div class="c" style="left:1370px;top:79px;width:80px;height:25px;text-align:right;"><div style="position:absolute;left:5px;right:4px;top:3.0px;overflow:hidden;text-align:right;">3,28</div></div><div class="c" style="left:1450px;top:79px;width:40px;height:25px;text-align:right;"><div style="position:absolute;left:5px;right:4px;top:3.0px;overflow:hidden;text-align:right;">5</div></div><div class="c" style="left:1490px;top:79px;width:65px;height:25px;text-align:right;"><div style="position:absolute;left:5px;right:4px;top:3.0px;overflow:hidden;text-align:right;">20</div></div><div class="c" style="left:1555px;top:79px;width:72px;height:25px;text-align:right;"><div style="position:absolute;left:5px;right:4px;top:3.0px;overflow:hidden;text-align:right;">0,66</div></div><div class="c" style="left:0px;top:105px;width:72px;height:25px;text-align:right;"><div style="position:absolute;left:5px;right:4px;top:3.0px;overflow:hidden;text-align:right;">5</div></div><div class="c" style="left:72px;top:105px;width:128px;height:25px;"><div style="position:absolute;left:5px;right:0px;top:3.0px;overflow:hidden;">4811222003559</div></div><div class="c" style="left:200px;top:105px;width:89px;height:25px;"><div style="position:absolute;left:5px;right:0px;top:3.0px;overflow:hidden;">24458</div></div><div class="c" style="left:289px;top:105px;width:250px;height:25px;"><div style="position:absolute;left:5px;right:0px;top:3.0px;overflow:hidden;">ПИВО РЕЧИЦКОЕ СВЕТЛОЕ Ж/Б 0.5Л</div></div><div class="c" style="left:539px;top:105px;width:31px;height:25px;"><div style="position:absolute;left:5px;right:0px;top:3.0px;overflow:hidden;">шт</div></div><div class="c" style="left:570px;top:105px;width:171px;height:25px;"><div style="position:absolute;left:5px;right:0px;top:3.0px;overflow:hidden;"></div></div><div class="c" style="left:741px;top:105px;width:128px;height:25px;"><div style="position:absolute;left:5px;right:0px;top:3.0px;overflow:hidden;"></div></div><div class="c" style="left:869px;top:105px;width:31px;height:25px;"><div style="position:absolute;left:5px;right:0px;top:3.0px;overflow:hidden;">шт</div></div><div class="c" style="left:900px;top:105px;width:58px;height:25px;text-align:right;"><div style="position:absolute;left:5px;right:4px;top:3.0px;overflow:hidden;text-align:right;">24</div></div><div class="c" style="left:958px;top:105px;width:63px;height:25px;background:#ffb900;text-align:right;"><div style="position:absolute;left:5px;right:4px;top:3.0px;overflow:hidden;text-align:right;">1</div></div><div class="c" style="left:1021px;top:105px;width:66px;height:25px;text-align:right;"><div style="position:absolute;left:5px;right:4px;top:3.0px;overflow:hidden;text-align:right;">24</div></div><div class="c" style="left:1087px;top:105px;width:64px;height:25px;background:#d4fcd4;text-align:right;"><div style="position:absolute;left:5px;right:4px;top:3.0px;overflow:hidden;text-align:right;">24</div></div><div class="c" style="left:1151px;top:105px;width:66px;height:25px;background:#fde0fc;text-align:right;"><div style="position:absolute;left:5px;right:4px;top:3.0px;overflow:hidden;text-align:right;"></div></div><div class="c" style="left:1217px;top:105px;width:88px;height:25px;"><div style="position:absolute;left:5px;right:0px;top:3.0px;overflow:hidden;">Поставщика</div></div><div class="c" style="left:1305px;top:105px;width:65px;height:25px;background:#d4fcd4;text-align:right;"><div style="position:absolute;left:5px;right:4px;top:3.0px;overflow:hidden;text-align:right;">0,7</div></div><div class="c" style="left:1370px;top:105px;width:80px;height:25px;text-align:right;"><div style="position:absolute;left:5px;right:4px;top:3.0px;overflow:hidden;text-align:right;">16,8</div></div><div class="c" style="left:1450px;top:105px;width:40px;height:25px;text-align:right;"><div style="position:absolute;left:5px;right:4px;top:3.0px;overflow:hidden;text-align:right;">5</div></div><div class="c" style="left:1490px;top:105px;width:65px;height:25px;text-align:right;"><div style="position:absolute;left:5px;right:4px;top:3.0px;overflow:hidden;text-align:right;">20</div></div><div class="c" style="left:1555px;top:105px;width:72px;height:25px;text-align:right;"><div style="position:absolute;left:5px;right:4px;top:3.0px;overflow:hidden;text-align:right;">3,36</div></div><div class="c" style="left:0px;top:131px;width:72px;height:25px;text-align:right;"><div style="position:absolute;left:5px;right:4px;top:3.0px;overflow:hidden;text-align:right;">6</div></div><div class="c" style="left:72px;top:131px;width:128px;height:25px;"><div style="position:absolute;left:5px;right:0px;top:3.0px;overflow:hidden;">4013743000646</div></div><div class="c" style="left:200px;top:131px;width:89px;height:25px;"><div style="position:absolute;left:5px;right:0px;top:3.0px;overflow:hidden;">14099</div></div><div class="c" style="left:289px;top:131px;width:250px;height:25px;"><div style="position:absolute;left:5px;right:0px;top:3.0px;overflow:hidden;">КОФЕ МОККА ФИКС ГОЛД МОЛ 500Г</div></div><div class="c" style="left:539px;top:131px;width:31px;height:25px;"><div style="position:absolute;left:5px;right:0px;top:3.0px;overflow:hidden;">шт</div></div><div class="c" style="left:570px;top:131px;width:171px;height:25px;"><div style="position:absolute;left:5px;right:0px;top:3.0px;overflow:hidden;"></div></div><div class="c" style="left:741px;top:131px;width:128px;height:25px;"><div style="position:absolute;left:5px;right:0px;top:3.0px;overflow:hidden;"></div></div><div class="c" style="left:869px;top:131px;width:31px;height:25px;"><div style="position:absolute;left:5px;right:0px;top:3.0px;overflow:hidden;">шт</div></div><div class="c" style="left:900px;top:131px;width:58px;height:25px;text-align:right;"><div style="position:absolute;left:5px;right:4px;top:3.0px;overflow:hidden;text-align:right;">12</div></div><div class="c" style="left:958px;top:131px;width:63px;height:25px;background:#ffb900;text-align:right;"><div style="position:absolute;left:5px;right:4px;top:3.0px;overflow:hidden;text-align:right;">1</div></div><div class="c" style="left:1021px;top:131px;width:66px;height:25px;text-align:right;"><div style="position:absolute;left:5px;right:4px;top:3.0px;overflow:hidden;text-align:right;">12</div></div><div class="c" style="left:1087px;top:131px;width:64px;height:25px;background:#d4fcd4;text-align:right;"><div style="position:absolute;left:5px;right:4px;top:3.0px;overflow:hidden;text-align:right;">12</div></div><div class="c" style="left:1151px;top:131px;width:66px;height:25px;background:#fde0fc;text-align:right;"><div style="position:absolute;left:5px;right:4px;top:3.0px;overflow:hidden;text-align:right;"></div></div><div class="c" style="left:1217px;top:131px;width:88px;height:25px;"><div style="position:absolute;left:5px;right:0px;top:3.0px;overflow:hidden;">Поставщика</div></div><div class="c" style="left:1305px;top:131px;width:65px;height:25px;background:#d4fcd4;text-align:right;"><div style="position:absolute;left:5px;right:4px;top:3.0px;overflow:hidden;text-align:right;">3,95</div></div><div class="c" style="left:1370px;top:131px;width:80px;height:25px;text-align:right;"><div style="position:absolute;left:5px;right:4px;top:3.0px;overflow:hidden;text-align:right;">47,4</div></div><div class="c" style="left:1450px;top:131px;width:40px;height:25px;text-align:right;"><div style="position:absolute;left:5px;right:4px;top:3.0px;overflow:hidden;text-align:right;">5</div></div><div class="c" style="left:1490px;top:131px;width:65px;height:25px;text-align:right;"><div style="position:absolute;left:5px;right:4px;top:3.0px;overflow:hidden;text-align:right;">20</div></div><div class="c" style="left:1555px;top:131px;width:72px;height:25px;text-align:right;"><div style="position:absolute;left:5px;right:4px;top:3.0px;overflow:hidden;text-align:right;">9,48</div></div><div class="c" style="left:0px;top:157px;width:72px;height:26px;text-align:right;"><div style="position:absolute;left:5px;right:4px;top:3.5px;overflow:hidden;text-align:right;">7</div></div><div class="c" style="left:72px;top:157px;width:128px;height:26px;"><div style="position:absolute;left:5px;right:0px;top:3.5px;overflow:hidden;">4810285000420</div></div><div class="c" style="left:200px;top:157px;width:89px;height:26px;"><div style="position:absolute;left:5px;right:0px;top:3.5px;overflow:hidden;">24313</div></div><div class="c" style="left:289px;top:157px;width:250px;height:26px;"><div style="position:absolute;left:5px;right:0px;top:3.5px;overflow:hidden;">ПИВО ЛИДСКОЕ КЛАССИЧЕСКОЕ П</div></div><div class="c" style="left:539px;top:157px;width:31px;height:26px;"><div style="position:absolute;left:5px;right:0px;top:3.5px;overflow:hidden;">шт</div></div><div class="c" style="left:570px;top:157px;width:171px;height:26px;"><div style="position:absolute;left:5px;right:0px;top:3.5px;overflow:hidden;"></div></div><div class="c" style="left:741px;top:157px;width:128px;height:26px;"><div style="position:absolute;left:5px;right:0px;top:3.5px;overflow:hidden;"></div></div><div class="c" style="left:869px;top:157px;width:31px;height:26px;"><div style="position:absolute;left:5px;right:0px;top:3.5px;overflow:hidden;">шт</div></div><div class="c" style="left:900px;top:157px;width:58px;height:26px;text-align:right;"><div style="position:absolute;left:5px;right:4px;top:3.5px;overflow:hidden;text-align:right;">6</div></div><div class="c" style="left:958px;top:157px;width:63px;height:26px;background:#ffb900;text-align:right;"><div style="position:absolute;left:5px;right:4px;top:3.5px;overflow:hidden;text-align:right;">1</div></div><div class="c" style="left:1021px;top:157px;width:66px;height:26px;text-align:right;"><div style="position:absolute;left:5px;right:4px;top:3.5px;overflow:hidden;text-align:right;">6</div></div><div class="c" style="left:1087px;top:157px;width:64px;height:26px;background:#d4fcd4;text-align:right;"><div style="position:absolute;left:5px;right:4px;top:3.5px;overflow:hidden;text-align:right;">6</div></div><div class="c" style="left:1151px;top:157px;width:66px;height:26px;background:#fde0fc;text-align:right;"><div style="position:absolute;left:5px;right:4px;top:3.5px;overflow:hidden;text-align:right;"></div></div><div class="c" style="left:1217px;top:157px;width:88px;height:26px;"><div style="position:absolute;left:5px;right:0px;top:3.5px;overflow:hidden;">Поставщика</div></div><div class="c" style="left:1305px;top:157px;width:65px;height:26px;background:#d4fcd4;text-align:right;"><div style="position:absolute;left:5px;right:4px;top:3.5px;overflow:hidden;text-align:right;">1,98</div></div><div class="c" style="left:1370px;top:157px;width:80px;height:26px;text-align:right;"><div style="position:absolute;left:5px;right:4px;top:3.5px;overflow:hidden;text-align:right;">11,88</div></div><div class="c" style="left:1450px;top:157px;width:40px;height:26px;text-align:right;"><div style="position:absolute;left:5px;right:4px;top:3.5px;overflow:hidden;text-align:right;">5</div></div><div class="c" style="left:1490px;top:157px;width:65px;height:26px;text-align:right;"><div style="position:absolute;left:5px;right:4px;top:3.5px;overflow:hidden;text-align:right;">20</div></div><div class="c" style="left:1555px;top:157px;width:72px;height:26px;text-align:right;"><div style="position:absolute;left:5px;right:4px;top:3.5px;overflow:hidden;text-align:right;">2,38</div></div><div class="c" style="left:0px;top:184px;width:72px;height:25px;text-align:right;"><div style="position:absolute;left:5px;right:4px;top:3.0px;overflow:hidden;text-align:right;">8</div></div><div class="c" style="left:72px;top:184px;width:128px;height:25px;"><div style="position:absolute;left:5px;right:0px;top:3.0px;overflow:hidden;">4791045007104</div></div><div class="c" style="left:200px;top:184px;width:89px;height:25px;"><div style="position:absolute;left:5px;right:0px;top:3.0px;overflow:hidden;">38335</div></div><div class="c" style="left:289px;top:184px;width:250px;height:25px;"><div style="position:absolute;left:5px;right:0px;top:3.0px;overflow:hidden;">ЧАЙ ХЭЙЛИС ГАРМОНИЯ ПРИРОДЫ</div></div><div class="c" style="left:539px;top:184px;width:31px;height:25px;"><div style="position:absolute;left:5px;right:0px;top:3.0px;overflow:hidden;">шт</div></div><div class="c" style="left:570px;top:184px;width:171px;height:25px;"><div style="position:absolute;left:5px;right:0px;top:3.0px;overflow:hidden;"></div></div><div class="c" style="left:741px;top:184px;width:128px;height:25px;"><div style="position:absolute;left:5px;right:0px;top:3.0px;overflow:hidden;">4791045007104</div></div><div class="c" style="left:869px;top:184px;width:31px;height:25px;"><div style="position:absolute;left:5px;right:0px;top:3.0px;overflow:hidden;">шт</div></div><div class="c" style="left:900px;top:184px;width:58px;height:25px;text-align:right;"><div style="position:absolute;left:5px;right:4px;top:3.0px;overflow:hidden;text-align:right;">1</div></div><div class="c" style="left:958px;top:184px;width:63px;height:25px;background:#ffb900;text-align:right;"><div style="position:absolute;left:5px;right:4px;top:3.0px;overflow:hidden;text-align:right;">1</div></div><div class="c" style="left:1021px;top:184px;width:66px;height:25px;background:#ff0000;text-align:right;"><div style="position:absolute;left:5px;right:4px;top:3.0px;overflow:hidden;text-align:right;">2</div></div><div class="c" style="left:1087px;top:184px;width:64px;height:25px;background:#d4fcd4;text-align:right;"><div style="position:absolute;left:5px;right:4px;top:3.0px;overflow:hidden;text-align:right;">1</div></div><div class="c" style="left:1151px;top:184px;width:66px;height:25px;background:#fde0fc;text-align:right;"><div style="position:absolute;left:5px;right:4px;top:3.0px;overflow:hidden;text-align:right;"></div></div><div class="c" style="left:1217px;top:184px;width:88px;height:25px;"><div style="position:absolute;left:5px;right:0px;top:3.0px;overflow:hidden;">Поставщика</div></div><div class="c" style="left:1305px;top:184px;width:65px;height:25px;background:#d4fcd4;text-align:right;"><div style="position:absolute;left:5px;right:4px;top:3.0px;overflow:hidden;text-align:right;">2,2</div></div><div class="c" style="left:1370px;top:184px;width:80px;height:25px;text-align:right;"><div style="position:absolute;left:5px;right:4px;top:3.0px;overflow:hidden;text-align:right;">2,2</div></div><div class="c" style="left:1450px;top:184px;width:40px;height:25px;text-align:right;"><div style="position:absolute;left:5px;right:4px;top:3.0px;overflow:hidden;text-align:right;">5</div></div><div class="c" style="left:1490px;top:184px;width:65px;height:25px;text-align:right;"><div style="position:absolute;left:5px;right:4px;top:3.0px;overflow:hidden;text-align:right;">20</div></div><div class="c" style="left:1555px;top:184px;width:72px;height:25px;text-align:right;"><div style="position:absolute;left:5px;right:4px;top:3.0px;overflow:hidden;text-align:right;">0,44</div></div><div class="c" style="left:0px;top:210px;width:72px;height:25px;text-align:right;"><div style="position:absolute;left:5px;right:4px;top:3.0px;overflow:hidden;text-align:right;">9</div></div><div class="c" style="left:72px;top:210px;width:128px;height:25px;"><div style="position:absolute;left:5px;right:0px;top:3.0px;overflow:hidden;">4810285001250</div></div><div class="c" style="left:200px;top:210px;width:89px;height:25px;"><div style="position:absolute;left:5px;right:0px;top:3.0px;overflow:hidden;">24302</div></div><div class="c" style="left:289px;top:210px;width:250px;height:25px;"><div style="position:absolute;left:5px;right:0px;top:3.0px;overflow:hidden;">ПИВО ЛИДСКОЕ Б/АЛК.% 0.5Л</div></div><div class="c" style="left:539px;top:210px;width:31px;height:25px;"><div style="position:absolute;left:5px;right:0px;top:3.0px;overflow:hidden;">шт</div></div><div class="c" style="left:570px;top:210px;width:171px;height:25px;"><div style="position:absolute;left:5px;right:0px;top:3.0px;overflow:hidden;"></div></div><div class="c" style="left:741px;top:210px;width:128px;height:25px;"><div style="position:absolute;left:5px;right:0px;top:3.0px;overflow:hidden;"></div></div><div class="c" style="left:869px;top:210px;width:31px;height:25px;"><div style="position:absolute;left:5px;right:0px;top:3.0px;overflow:hidden;">шт</div></div><div class="c" style="left:900px;top:210px;width:58px;height:25px;text-align:right;"><div style="position:absolute;left:5px;right:4px;top:3.0px;overflow:hidden;text-align:right;">20</div></div><div class="c" style="left:958px;top:210px;width:63px;height:25px;background:#ffb900;text-align:right;"><div style="position:absolute;left:5px;right:4px;top:3.0px;overflow:hidden;text-align:right;">1</div></div><div class="c" style="left:1021px;top:210px;width:66px;height:25px;text-align:right;"><div style="position:absolute;left:5px;right:4px;top:3.0px;overflow:hidden;text-align:right;">20</div></div><div class="c" style="left:1087px;top:210px;width:64px;height:25px;background:#d4fcd4;text-align:right;"><div style="position:absolute;left:5px;right:4px;top:3.0px;overflow:hidden;text-align:right;">20</div></div><div class="c" style="left:1151px;top:210px;width:66px;height:25px;background:#fde0fc;text-align:right;"><div style="position:absolute;left:5px;right:4px;top:3.0px;overflow:hidden;text-align:right;"></div></div><div class="c" style="left:1217px;top:210px;width:88px;height:25px;"><div style="position:absolute;left:5px;right:0px;top:3.0px;overflow:hidden;">Поставщика</div></div><div class="c" style="left:1305px;top:210px;width:65px;height:25px;background:#d4fcd4;text-align:right;"><div style="position:absolute;left:5px;right:4px;top:3.0px;overflow:hidden;text-align:right;">0,86</div></div><div class="c" style="left:1370px;top:210px;width:80px;height:25px;text-align:right;"><div style="position:absolute;left:5px;right:4px;top:3.0px;overflow:hidden;text-align:right;">17,2</div></div><div class="c" style="left:1450px;top:210px;width:40px;height:25px;text-align:right;"><div style="position:absolute;left:5px;right:4px;top:3.0px;overflow:hidden;text-align:right;">5</div></div><div class="c" style="left:1490px;top:210px;width:65px;height:25px;text-align:right;"><div style="position:absolute;left:5px;right:4px;top:3.0px;overflow:hidden;text-align:right;">20</div></div><div class="c" style="left:1555px;top:210px;width:72px;height:25px;text-align:right;"><div style="position:absolute;left:5px;right:4px;top:3.0px;overflow:hidden;text-align:right;">3,44</div></div><div class="c" style="left:0px;top:236px;width:72px;height:25px;text-align:right;"><div style="position:absolute;left:5px;right:4px;top:3.0px;overflow:hidden;text-align:right;">10</div></div><div class="c" style="left:72px;top:236px;width:128px;height:25px;"><div style="position:absolute;left:5px;right:0px;top:3.0px;overflow:hidden;">4600338004884</div></div><div class="c" style="left:200px;top:236px;width:89px;height:25px;"><div style="position:absolute;left:5px;right:0px;top:3.0px;overflow:hidden;">6491</div></div><div class="c" style="left:289px;top:236px;width:250px;height:25px;"><div style="position:absolute;left:5px;right:0px;top:3.0px;overflow:hidden;">ДЕТ.ПИТ.ФРУТОНЯНЯ ПЮРЕ КАП.БРОК</div></div><div class="c" style="left:539px;top:236px;width:31px;height:25px;"><div style="position:absolute;left:5px;right:0px;top:3.0px;overflow:hidden;">шт</div></div><div class="c" style="left:570px;top:236px;width:171px;height:25px;"><div style="position:absolute;left:5px;right:0px;top:3.0px;overflow:hidden;"></div></div><div class="c" style="left:741px;top:236px;width:128px;height:25px;"><div style="position:absolute;left:5px;right:0px;top:3.0px;overflow:hidden;"></div></div><div class="c" style="left:869px;top:236px;width:31px;height:25px;"><div style="position:absolute;left:5px;right:0px;top:3.0px;overflow:hidden;">шт</div></div><div class="c" style="left:900px;top:236px;width:58px;height:25px;text-align:right;"><div style="position:absolute;left:5px;right:4px;top:3.0px;overflow:hidden;text-align:right;">12</div></div><div class="c" style="left:958px;top:236px;width:63px;height:25px;background:#ffb900;text-align:right;"><div style="position:absolute;left:5px;right:4px;top:3.0px;overflow:hidden;text-align:right;">1</div></div><div class="c" style="left:1021px;top:236px;width:66px;height:25px;text-align:right;"><div style="position:absolute;left:5px;right:4px;top:3.0px;overflow:hidden;text-align:right;">12</div></div><div class="c" style="left:1087px;top:236px;width:64px;height:25px;background:#d4fcd4;text-align:right;"><div style="position:absolute;left:5px;right:4px;top:3.0px;overflow:hidden;text-align:right;">12</div></div><div class="c" style="left:1151px;top:236px;width:66px;height:25px;background:#fde0fc;text-align:right;"><div style="position:absolute;left:5px;right:4px;top:3.0px;overflow:hidden;text-align:right;"></div></div><div class="c" style="left:1217px;top:236px;width:88px;height:25px;"><div style="position:absolute;left:5px;right:0px;top:3.0px;overflow:hidden;">Поставщика</div></div><div class="c" style="left:1305px;top:236px;width:65px;height:25px;background:#d4fcd4;text-align:right;"><div style="position:absolute;left:5px;right:4px;top:3.0px;overflow:hidden;text-align:right;">0,78</div></div><div class="c" style="left:1370px;top:236px;width:80px;height:25px;text-align:right;"><div style="position:absolute;left:5px;right:4px;top:3.0px;overflow:hidden;text-align:right;">9,36</div></div><div class="c" style="left:1450px;top:236px;width:40px;height:25px;text-align:right;"><div style="position:absolute;left:5px;right:4px;top:3.0px;overflow:hidden;text-align:right;">4</div></div><div class="c" style="left:1490px;top:236px;width:65px;height:25px;text-align:right;"><div style="position:absolute;left:5px;right:4px;top:3.0px;overflow:hidden;text-align:right;">10</div></div><div class="c" style="left:1555px;top:236px;width:72px;height:25px;text-align:right;"><div style="position:absolute;left:5px;right:4px;top:3.0px;overflow:hidden;text-align:right;">0,94</div></div><div class="c" style="left:0px;top:262px;width:72px;height:26px;text-align:right;"><div style="position:absolute;left:5px;right:4px;top:3.5px;overflow:hidden;text-align:right;">11</div></div><div class="c" style="left:72px;top:262px;width:128px;height:26px;"><div style="position:absolute;left:5px;right:0px;top:3.5px;overflow:hidden;">4810148001106</div></div><div class="c" style="left:200px;top:262px;width:89px;height:26px;"><div style="position:absolute;left:5px;right:0px;top:3.5px;overflow:hidden;">3849</div></div><div class="c" style="left:289px;top:262px;width:250px;height:26px;"><div style="position:absolute;left:5px;right:0px;top:3.5px;overflow:hidden;">ВОДА ПИТ.ДЕТ.Н/ГАЗ.ФРОСТ КЛАССИК</div></div><div class="c" style="left:539px;top:262px;width:31px;height:26px;"><div style="position:absolute;left:5px;right:0px;top:3.5px;overflow:hidden;">шт</div></div><div class="c" style="left:570px;top:262px;width:171px;height:26px;"><div style="position:absolute;left:5px;right:0px;top:3.5px;overflow:hidden;"></div></div><div class="c" style="left:741px;top:262px;width:128px;height:26px;"><div style="position:absolute;left:5px;right:0px;top:3.5px;overflow:hidden;"></div></div><div class="c" style="left:869px;top:262px;width:31px;height:26px;"><div style="position:absolute;left:5px;right:0px;top:3.5px;overflow:hidden;">шт</div></div><div class="c" style="left:900px;top:262px;width:58px;height:26px;text-align:right;"><div style="position:absolute;left:5px;right:4px;top:3.5px;overflow:hidden;text-align:right;">15</div></div><div class="c" style="left:958px;top:262px;width:63px;height:26px;background:#ffb900;text-align:right;"><div style="position:absolute;left:5px;right:4px;top:3.5px;overflow:hidden;text-align:right;">1</div></div><div class="c" style="left:1021px;top:262px;width:66px;height:26px;text-align:right;"><div style="position:absolute;left:5px;right:4px;top:3.5px;overflow:hidden;text-align:right;">15</div></div><div class="c" style="left:1087px;top:262px;width:64px;height:26px;background:#d4fcd4;text-align:right;"><div style="position:absolute;left:5px;right:4px;top:3.5px;overflow:hidden;text-align:right;">15</div></div><div class="c" style="left:1151px;top:262px;width:66px;height:26px;background:#fde0fc;text-align:right;"><div style="position:absolute;left:5px;right:4px;top:3.5px;overflow:hidden;text-align:right;"></div></div><div class="c" style="left:1217px;top:262px;width:88px;height:26px;"><div style="position:absolute;left:5px;right:0px;top:3.5px;overflow:hidden;">Поставщика</div></div><div class="c" style="left:1305px;top:262px;width:65px;height:26px;background:#d4fcd4;text-align:right;"><div style="position:absolute;left:5px;right:4px;top:3.5px;overflow:hidden;text-align:right;">0,33</div></div><div class="c" style="left:1370px;top:262px;width:80px;height:26px;text-align:right;"><div style="position:absolute;left:5px;right:4px;top:3.5px;overflow:hidden;text-align:right;">4,95</div></div><div class="c" style="left:1450px;top:262px;width:40px;height:26px;text-align:right;"><div style="position:absolute;left:5px;right:4px;top:3.5px;overflow:hidden;text-align:right;">5</div></div><div class="c" style="left:1490px;top:262px;width:65px;height:26px;text-align:right;"><div style="position:absolute;left:5px;right:4px;top:3.5px;overflow:hidden;text-align:right;">20</div></div><div class="c" style="left:1555px;top:262px;width:72px;height:26px;text-align:right;"><div style="position:absolute;left:5px;right:4px;top:3.5px;overflow:hidden;text-align:right;">0,99</div></div></div><div class="a" style="left:353px;top:565px;width:1px;height:323px;background:#dadada"></div><div class="a" style="left:481px;top:565px;width:1px;height:323px;background:#dadada"></div><div class="a" style="left:570px;top:565px;width:1px;height:323px;background:#dadada"></div><div class="a" style="left:820px;top:565px;width:1px;height:323px;background:#dadada"></div><div class="a" style="left:851px;top:565px;width:1px;height:323px;background:#dadada"></div><div class="a" style="left:1022px;top:565px;width:1px;height:323px;background:#dadada"></div><div class="a" style="left:1150px;top:565px;width:1px;height:323px;background:#dadada"></div><div class="a" style="left:1181px;top:565px;width:1px;height:323px;background:#dadada"></div><div class="a" style="left:1239px;top:565px;width:1px;height:323px;background:#dadada"></div><div class="a" style="left:1302px;top:565px;width:1px;height:323px;background:#dadada"></div><div class="a" style="left:1368px;top:565px;width:1px;height:323px;background:#dadada"></div><div class="a" style="left:1432px;top:565px;width:1px;height:323px;background:#dadada"></div><div class="a" style="left:1498px;top:565px;width:1px;height:323px;background:#dadada"></div><div class="a" style="left:1586px;top:565px;width:1px;height:323px;background:#dadada"></div><div class="a" style="left:1651px;top:565px;width:1px;height:323px;background:#dadada"></div><div class="a" style="left:1731px;top:565px;width:1px;height:323px;background:#dadada"></div><div class="a" style="left:1771px;top:565px;width:1px;height:323px;background:#dadada"></div><div class="a" style="left:1836px;top:565px;width:1px;height:323px;background:#dadada"></div><div class="a" style="left:1899px;top:609px;width:10px;height:279px;background:#fff"></div><div class="a" style="left:281px;top:634px;width:1618px;height:1px;background:#dadada"></div><div class="a" style="left:281px;top:660px;width:1618px;height:1px;background:#dadada"></div><div class="a" style="left:281px;top:687px;width:1618px;height:1px;background:#dadada"></div><div class="a" style="left:281px;top:713px;width:1618px;height:1px;background:#dadada"></div><div class="a" style="left:281px;top:739px;width:1618px;height:1px;background:#dadada"></div><div class="a" style="left:281px;top:765px;width:1618px;height:1px;background:#dadada"></div><div class="a" style="left:281px;top:792px;width:1618px;height:1px;background:#dadada"></div><div class="a" style="left:281px;top:818px;width:1618px;height:1px;background:#dadada"></div><div class="a" style="left:281px;top:844px;width:1618px;height:1px;background:#dadada"></div><div class="a" style="left:281px;top:870px;width:1618px;height:1px;background:#dadada"></div><div class="a" style="left:281px;top:608px;width:1628px;height:1px;background:#dadada"></div><div class="c" style="left:305px;top:567px;width:46px;height:40px;line-height:20px;padding:0;text-align:left">Номер<br>строки</div><div class="c" style="left:356px;top:577px;width:122px;height:20px;text-align:center;padding:0">Штрихкод</div><div class="c" style="left:484px;top:577px;width:83px;height:20px;text-align:center;padding:0">Код</div><div class="c" style="left:573px;top:577px;width:244px;height:20px;text-align:center;padding:0">Наименование</div><div class="c" style="left:824px;top:567px;width:23px;height:40px;line-height:20px;padding:0;text-align:center">Ед.<br>изм</div><div class="c" style="left:854px;top:577px;width:165px;height:20px;text-align:center;padding:0">Партия</div><div class="c" style="left:1026px;top:567px;width:120px;height:40px;line-height:20px;padding:0;text-align:center">Штрихкод<br>упаковки</div><div class="c" style="left:1154px;top:567px;width:23px;height:40px;line-height:20px;padding:0;text-align:center">Ед.<br>изм</div><div class="c" style="left:1185px;top:567px;width:50px;height:40px;line-height:20px;padding:0;text-align:center">Кол-во<br>в</div><div class="c" style="left:1243px;top:567px;width:55px;height:40px;line-height:20px;padding:0;text-align:center">Кол-во<br>упаковок</div><div class="c" style="left:1306px;top:567px;width:58px;height:40px;line-height:20px;padding:0;text-align:center">Кол-во<br>(предзаказ)</div><div class="c" style="left:1371px;top:577px;width:58px;height:20px;text-align:center;padding:0">Кол-во</div><div class="c" style="left:1436px;top:567px;width:58px;height:40px;line-height:20px;padding:0;text-align:center">Кол-во<br>(поставлено)</div><div class="c" style="left:1501px;top:577px;width:82px;height:20px;text-align:center;padding:0">Вид цен</div><div class="c" style="left:1589px;top:577px;width:59px;height:20px;text-align:center;padding:0">Цена</div><div class="c" style="left:1654px;top:577px;width:74px;height:20px;text-align:center;padding:0">Сумма</div><div class="c" style="left:1735px;top:567px;width:32px;height:40px;line-height:20px;padding:0;text-align:center">НДС,<br>номер</div><div class="c" style="left:1774px;top:577px;width:59px;height:20px;text-align:center;padding:0">НДС, %</div><div class="c" style="left:1840px;top:567px;width:64px;height:40px;line-height:20px;padding:0;text-align:center">Сумма<br>НДС</div><svg class="a" style="left:0;top:0" width="1917" height="968" viewBox="0 0 1917 968" fill="none" stroke-linecap="round" stroke-linejoin="round"><circle cx="293.5" cy="586" r="6.6" stroke="#4ec3ef" stroke-width="1.7" fill="none"/><path d="M290.8 587.6 L293.5 584.8 L296.2 587.6" stroke="#3c3c3c" stroke-width="1.7" fill="none" /></svg><div class="a" style="left:281px;top:888px;width:1363px;height:10px;background:#d9d9d9"></div><div class="a" style="left:1900px;top:609px;width:9px;height:184px;background:#d9d9d9"></div><div class="a" style="left:280px;top:904px;width:28px;height:28px;background:#d3e3e9;border:1px solid #c8d6dc;border-radius:5px"></div><div class="a" style="left:345px;top:904px;width:1px;height:28px;background:#cfcfcf"></div><div class="a" style="left:416px;top:904px;width:1px;height:28px;background:#cfcfcf"></div><div class="a" style="left:488px;top:904px;width:1px;height:28px;background:#cfcfcf"></div><div class="a" style="left:526px;top:904px;width:1px;height:28px;background:#cfcfcf"></div><svg class="a" style="left:0;top:0" width="1917" height="968" viewBox="0 0 1917 968" fill="none" stroke-linecap="round" stroke-linejoin="round"><circle cx="286.2" cy="911.8" r="1.9" stroke="#4ec3ef" stroke-width="1.6" fill="#a6def4"/><path d="M292.0 912.4 H303.5" stroke="#3c3c3c" stroke-width="2" fill="none" /><circle cx="286.2" cy="918" r="1.9" stroke="#4ec3ef" stroke-width="1.6" fill="#a6def4"/><path d="M292.0 918.6 H303.5" stroke="#3c3c3c" stroke-width="2" fill="none" /><circle cx="286.2" cy="924.3" r="1.9" stroke="#4ec3ef" stroke-width="1.6" fill="#a6def4"/><path d="M292.0 924.9 H303.5" stroke="#3c3c3c" stroke-width="2" fill="none" /><path d="M322.3 908.7 V927.8 M328.3 908.7 V927.8 M315.6 914.9 H334.90000000000003 M315.6 921.4 H334.90000000000003" stroke="#4ec3ef" stroke-width="1.8" fill="none" /><path d="M315.6 908.7 H334.90000000000003 V927.8 H315.6 Z" stroke="#3c3c3c" stroke-width="2" fill="none" stroke-linejoin="miter"/><path d="M355 911.4 H374.1 M360.3 921.4 H368.8" stroke="#3c3c3c" stroke-width="2" fill="none" /><path d="M357.4 916.4 H371.6 M362.6 926.5 H367" stroke="#4ec3ef" stroke-width="2" fill="none" /><path d="M404.38 916.31 L407.09 916.56 L407.09 919.44 L404.38 919.69 L403.71 921.31 L405.44 923.41 L403.41 925.44 L401.31 923.71 L399.69 924.38 L399.44 927.09 L396.56 927.09 L396.31 924.38 L394.69 923.71 L392.59 925.44 L390.56 923.41 L392.29 921.31 L391.62 919.69 L388.91 919.44 L388.91 916.56 L391.62 916.31 L392.29 914.69 L390.56 912.59 L392.59 910.56 L394.69 912.29 L396.31 911.62 L396.56 908.91 L399.44 908.91 L399.69 911.62 L401.31 912.29 L403.41 910.56 L405.44 912.59 L403.71 914.69 Z" stroke="#3c3c3c" stroke-width="1.9" fill="none" /><circle cx="398" cy="918" r="2.8" stroke="#4ec3ef" stroke-width="1.9" fill="none"/><text x="428.3" y="912.4" font-family="Liberation Sans" font-size="6.5" font-weight="bold" fill="#4ec3ef" text-anchor="middle">1</text><text x="428.3" y="920.4" font-family="Liberation Sans" font-size="6.5" font-weight="bold" fill="#4ec3ef" text-anchor="middle">2</text><text x="428.3" y="928.2" font-family="Liberation Sans" font-size="6.5" font-weight="bold" fill="#4ec3ef" text-anchor="middle">3</text><path d="M433.8 911.2 H445.1 M433.8 918.8 H445.1 M433.8 926.3 H445.1" stroke="#3c3c3c" stroke-width="2" fill="none" /><path d="M458.7 910.2 H478.3 M458.7 915.1 H478.3 M458.7 920.1 H466.9 M458.7 925.1 H466.9" stroke="#3c3c3c" stroke-width="1.9" fill="none" /><path d="M474.09999999999997 918.5 V927.1 M469.8 922.8 H478.4" stroke="#4ec3ef" stroke-width="1.9" fill="none" /><path d="M504.8 912.4 H500.6 Q497.6 912.4 497.6 915.4 V924 Q497.6 927 500.6 927 H509.6 Q512.6 927 512.6 924 V919.8" stroke="#3c3c3c" stroke-width="2" fill="none" /><path d="M506.6 918.6 L516.4 909.1 M509.8 908.8 H516.6 V915.4" stroke="#4ec3ef" stroke-width="2" fill="none" /><path d="M538.8000000000001 924.1 H536.0 V912.4 H552.2 M549.2 908.8 L552.6 912.4 L549.2 916" stroke="#3c3c3c" stroke-width="2" fill="none" /><path d="M552.4 912.8 H555.2 V924.1 H542.2 M545.6 920.6 L542.2 924.1 L545.6 927.6" stroke="#4ec3ef" stroke-width="2" fill="none" /></svg><svg class="a" style="left:1683px;top:910px;" width="15" height="15" viewBox="0 0 15 15" fill="none" stroke-linecap="round" stroke-linejoin="round"><rect x="0.9" y="0.9" width="13.2" height="13.2" rx="3" fill="#fff" stroke="#6a6a6a" stroke-width="1.8"/></svg><div class="a t" style="left:1703.2px;top:908.5px;font-size:14.5px;color:#000;">Непоставленные товары (F10)</div><div class="a t" style="left:277px;top:945px;font-size:15px;color:#000;">Включить корректировку на форме</div><div class="a" style="left:528px;top:940px;width:40px;height:28px;background:#fff;border:1px solid #c9c9c9;border-radius:4px"></div><svg class="a" style="left:560px;top:960px;" width="7" height="7" viewBox="0 0 7 7" fill="none" stroke-linecap="round" stroke-linejoin="round"><path d="M7 0 L7 7 L0 7 Z" fill="#1b87c6"/></svg><svg class="a" style="left:540px;top:946px;" width="15" height="15" viewBox="0 0 15 15" fill="none" stroke-linecap="round" stroke-linejoin="round"><rect x="0.9" y="0.9" width="13.2" height="13.2" rx="3" fill="#fff" stroke="#6a6a6a" stroke-width="1.8"/></svg><div class="a" style="left:1390px;top:940px;width:57px;height:28px;background:#fff;border:1px solid #c8c8c8;border-radius:4px"></div><div class="a" style="left:1453px;top:940px;width:130px;height:28px;background:#fff;border:1px solid #c8c8c8;border-radius:4px"></div><div class="a" style="left:1588px;top:940px;width:124px;height:28px;background:#fff;border:1px solid #c8c8c8;border-radius:4px"></div><div class="a" style="left:1717px;top:940px;width:78px;height:28px;background:#fff;border:1px solid #c8c8c8;border-radius:4px"></div><div class="a" style="left:1800px;top:940px;width:114px;height:28px;background:#fff;border:1px solid #c8c8c8;border-radius:4px"></div><svg class="a" style="left:0;top:0" width="1917" height="968" viewBox="0 0 1917 968" fill="none" stroke-linecap="round" stroke-linejoin="round"><path d="M1413.4 952.3 Q1415.4 948.6 1419.6 948.6 Q1422.6 948.6 1424.6 950.6" stroke="#3c3c3c" stroke-width="2" fill="none" /><path d="M1426.8 947.2 L1426.8 953 L1421.2 953 Z" stroke="#3c3c3c" stroke-width="1" fill="#3c3c3c" /><path d="M1425.8 957.6 Q1423.8 961.4 1419.6 961.4 Q1416.6 961.4 1414.6 959.4" stroke="#4ec3ef" stroke-width="2" fill="none" /><path d="M1412.4 962.8 L1412.4 957 L1418 957 Z" stroke="#4ec3ef" stroke-width="1" fill="#4ec3ef" /><path d="M1476 947.6 H1485 L1488.6 951 V959.6 Q1488.6 961.6 1486.6 961.6 H1476 Q1474 961.6 1474 959.6 V949.6 Q1474 947.6 1476 947.6 Z" stroke="#3c3c3c" stroke-width="2" fill="none" /><path d="M1476.2 953.2 H1486.4 M1476.2 956.2 H1486.4" stroke="#9a9a9a" stroke-width="1.2" fill="none" /><path d="M1609.4 949.2 H1623.2 M1614.3 949 V947.2 H1618.3 V949" stroke="#8a8a8a" stroke-width="1.8" fill="none" /><path d="M1611.8 951.5 V959.8 Q1611.8 961.6 1613.6 961.6 H1619.2 Q1621 961.6 1621 959.8 V951.5" stroke="#3c3c3c" stroke-width="2" fill="none" /><path d="M1739.2 956.4 L1743.5 960.4 L1753 949" stroke="#3c3c3c" stroke-width="2" fill="none" /><path d="M1823 949 L1834 960 M1834 949 L1823 960" stroke="#3c3c3c" stroke-width="2.2" fill="none" /></svg><div class="a t" style="left:1492.4px;top:944.5px;font-size:14.5px;color:#878787;">Сохранить</div><div class="a t" style="left:1626.8px;top:944.5px;font-size:14.5px;color:#878787;">Отменить</div><div class="a t" style="left:1756.6px;top:944.5px;font-size:14.5px;color:#000;">OK</div><div class="a t" style="left:1839.2px;top:944.5px;font-size:14.5px;color:#000;">Закрыть</div><svg class="a" style="left:0;top:0" width="1917" height="968" viewBox="0 0 1917 968" fill="none" stroke-linecap="round" stroke-linejoin="round"><path d="M280.6 372.4 L1898.6 371.6" stroke="#f00" stroke-width="3" fill="none" /><path d="M1186 620 L1279 522" stroke="#f00" stroke-width="3.6" fill="none" /><path d="M1287 514.3 L1272.8 521.6 L1280.2 528 Z" stroke="#f00" stroke-width="1.5" fill="#f00" /><path d="M1538 665 L1684 529" stroke="#f00" stroke-width="3.6" fill="none" /><path d="M1691.4 522.2 L1677 528.4 L1683.6 535.2 Z" stroke="#f00" stroke-width="1.5" fill="#f00" /></svg>
</body></html>
